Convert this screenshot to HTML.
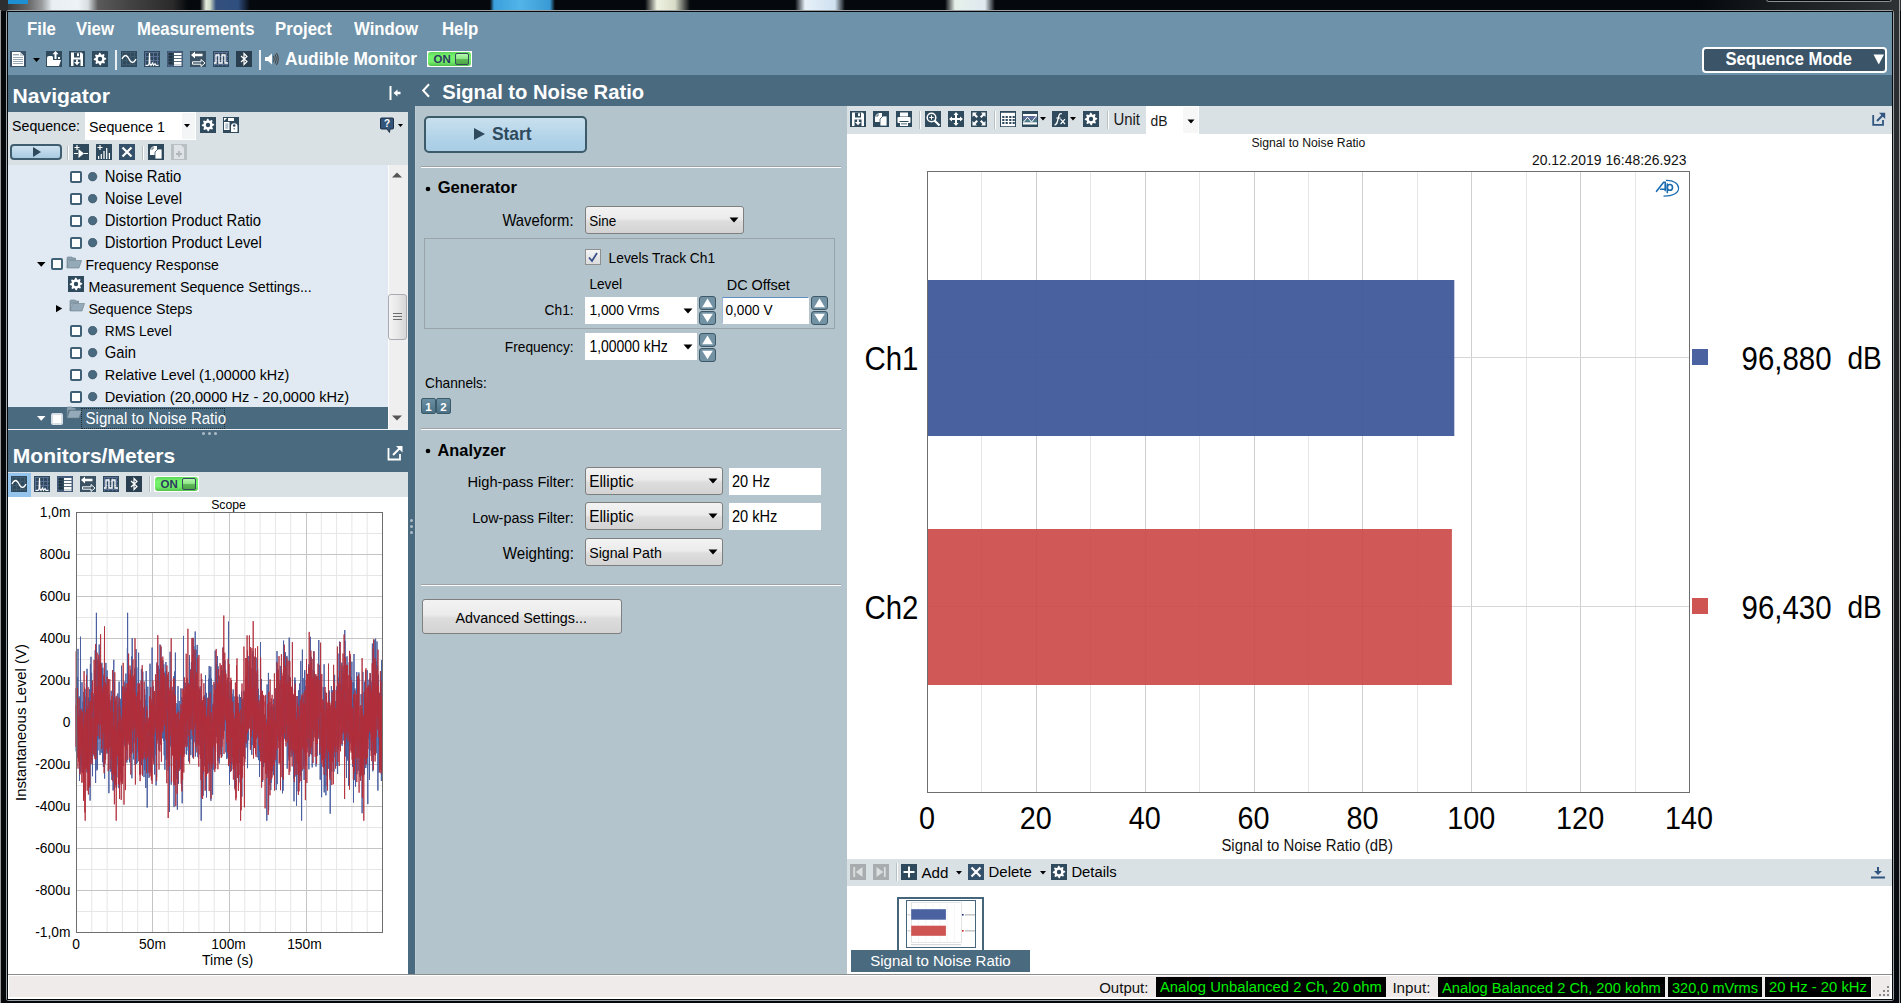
<!DOCTYPE html>
<html><head><meta charset="utf-8"><style>
html,body{margin:0;padding:0;}
body{width:1901px;height:1003px;overflow:hidden;position:relative;background:#05080c;font-family:"Liberation Sans",sans-serif;}
.b{position:absolute;}
.t{position:absolute;white-space:nowrap;line-height:1;}
</style></head><body>
<div class="b" style="left:0px;top:0px;width:1901px;height:12px;background:#05080c;"></div>
<div class="b" style="left:0px;top:0px;width:8px;height:11px;background:#2c2e30;"></div>
<div class="b" style="left:0px;top:11px;width:8px;height:992px;background:#06090c;"></div>
<div class="b" style="left:8px;top:0px;width:242px;height:11px;background:linear-gradient(90deg,#3a3a3a 0,#666 20px,#9a9c9e 34px,#e8eef2 44px,#eef3f8 70px,#d8dde0 80px,#5a5a5a 90px,#444 120px,#2a2a2a 165px,#05080c 180px,#05080c 192px,#e4ecdc 198px,#d0dcc8 202px,#34507c 208px,#2f4f80 230px,#05080c 242px);"></div>
<div class="b" style="left:8px;top:0px;width:20px;height:4px;background:#1e8fd0;"></div>
<div class="b" style="left:490px;top:0px;width:65px;height:11px;background:linear-gradient(90deg,#05080c,#3aa0dc 4px,#52b4e8 30px,#3a9ad4 60px,#05080c);"></div>
<div class="b" style="left:645px;top:0px;width:45px;height:11px;background:linear-gradient(90deg,#05080c,#eef2e0 12px,#d8dcc8 30px,#05080c);"></div>
<div class="b" style="left:795px;top:0px;width:50px;height:11px;background:linear-gradient(90deg,#05080c,#e6f0f8 10px,#cfe0f0 40px,#05080c);"></div>
<div class="b" style="left:945px;top:0px;width:50px;height:11px;background:linear-gradient(90deg,#05080c,#e6f0ea 10px,#dfe8f0 40px,#05080c);"></div>
<div class="b" style="left:0px;top:10px;width:1px;height:993px;background:#9a9a9a;"></div>
<div class="b" style="left:1700px;top:0px;width:201px;height:11px;background:linear-gradient(90deg,#05080c,#1a1d20 80px,#2e3133 190px);"></div>
<div class="b" style="left:1766px;top:-2px;width:126px;height:4px;background:#05080c;box-sizing:border-box;border:1px solid #8e8e8e;border-top:none;border-radius:0 0 3px 3px;"></div>
<div class="b" style="left:1894px;top:10px;width:5px;height:960px;background:linear-gradient(#2e3133,#1a1c1e 60%,#06090c);"></div>
<div class="b" style="left:1899px;top:0px;width:1px;height:1003px;background:#9a9a9a;"></div>
<div class="b" style="left:6px;top:10px;width:1888px;height:991px;background:#9aa0a4;border-radius:3px 3px 3px 3px;"></div>
<div class="b" style="left:7px;top:11px;width:1886px;height:989px;background:#06090c;"></div>
<div class="b" style="left:8px;top:12px;width:1884px;height:987px;background:#6e92a9;"></div>
<div class="t" style="left:27.00px;top:21.58px;font-size:16.80px;color:#fff;transform-origin:0 14.22px;transform:scale(1,1.07);font-weight:bold;">File</div>
<div class="t" style="left:76.00px;top:21.58px;font-size:16.80px;color:#fff;transform-origin:0 14.22px;transform:scale(1,1.07);font-weight:bold;">View</div>
<div class="t" style="left:137.00px;top:21.58px;font-size:16.80px;color:#fff;transform-origin:0 14.22px;transform:scale(1,1.07);font-weight:bold;">Measurements</div>
<div class="t" style="left:275.00px;top:21.58px;font-size:16.80px;color:#fff;transform-origin:0 14.22px;transform:scale(1,1.07);font-weight:bold;">Project</div>
<div class="t" style="left:354.00px;top:21.58px;font-size:16.80px;color:#fff;transform-origin:0 14.22px;transform:scale(1,1.07);font-weight:bold;">Window</div>
<div class="t" style="left:442.00px;top:21.58px;font-size:16.80px;color:#fff;transform-origin:0 14.22px;transform:scale(1,1.07);font-weight:bold;">Help</div>
<svg class="b" style="left:10px;top:51px;" width="16" height="16" viewBox="0 0 16 16"><rect x="0" y="0" width="16" height="16" fill="#3b5168"/><path d="M2 1 H10 L14 5 V15 H2 Z" fill="#fff"/><path d="M10 1 V5 H14" fill="#c8d0d8"/><rect x="3" y="3" width="6" height="1.4" fill="#9aa8b4"/><rect x="3" y="6" width="10" height="1" fill="#9aa8b4"/><rect x="3" y="8" width="10" height="1" fill="#9aa8b4"/><rect x="3" y="10" width="10" height="1" fill="#9aa8b4"/><rect x="3" y="12" width="10" height="1" fill="#9aa8b4"/></svg>
<svg class="b" style="left:33px;top:58px;" width="7" height="4" viewBox="0 0 7 4"><path d="M0 0 H7 L3.5 4 Z" fill="#000"/></svg>
<svg class="b" style="left:46px;top:51px;" width="16" height="16" viewBox="0 0 16 16"><rect x="0" y="0" width="16" height="16" fill="#2f4a5c"/><path d="M1 7 Q1 5 3 5 H6 L7 6 V15 H1 Z" fill="#fff"/><path d="M2.5 15 L5 9 H15 L13 15 Z" fill="#fff"/><path d="M9.5 0 L6.5 3.2 H8.5 V8 H10.5 V3.2 H12.5 Z" fill="#fff"/><rect x="12" y="6" width="2" height="2" fill="#fff"/></svg>
<svg class="b" style="left:69px;top:51px;" width="16" height="16" viewBox="0 0 16 16"><rect x="0" y="0" width="16" height="16" fill="#2f4a5c"/><path d="M2 1.5 H12.5 L14 3 V15 H2 Z" fill="#fff"/><rect x="5" y="1.5" width="6" height="5" fill="#2f4a5c"/><rect x="8" y="2.3" width="2" height="2.8" fill="#fff"/><rect x="4.5" y="8.5" width="7" height="6.5" fill="#2f4a5c"/><path d="M5 11 H11 L8 14.3 Z" fill="#fff"/><rect x="7.1" y="8.5" width="1.8" height="3" fill="#fff"/></svg>
<svg class="b" style="left:92px;top:51px;" width="16" height="16" viewBox="0 0 16 16"><rect x="0" y="0" width="16" height="16" fill="#2f4a5c"/><polygon points="14.13,7.09 14.19,8.30 12.46,9.12 12.16,9.97 12.98,11.69 12.16,12.59 10.36,11.95 9.55,12.33 8.91,14.13 7.70,14.19 6.88,12.46 6.03,12.16 4.31,12.98 3.41,12.16 4.05,10.36 3.67,9.55 1.87,8.91 1.81,7.70 3.54,6.88 3.84,6.03 3.02,4.31 3.84,3.41 5.64,4.05 6.45,3.67 7.09,1.87 8.30,1.81 9.12,3.54 9.97,3.84 11.69,3.02 12.59,3.84 11.95,5.64 12.33,6.45" fill="#fff"/><circle cx="8" cy="8" r="2.2" fill="#2f4a5c"/></svg>
<div class="b" style="left:115px;top:50px;width:2px;height:20px;background:#e8eef2;"></div>
<svg class="b" style="left:121px;top:51px;" width="16" height="16" viewBox="0 0 16 16"><rect x="0" y="0" width="16" height="16" fill="#2f4a5c"/><line x1="1.5" y1="1" x2="1.5" y2="15" stroke="#3f5a6c" stroke-width="1"/><line x1="1" y1="1.5" x2="15" y2="1.5" stroke="#3f5a6c" stroke-width="1"/><line x1="5.5" y1="1" x2="5.5" y2="15" stroke="#3f5a6c" stroke-width="1"/><line x1="1" y1="5.5" x2="15" y2="5.5" stroke="#3f5a6c" stroke-width="1"/><line x1="9.5" y1="1" x2="9.5" y2="15" stroke="#3f5a6c" stroke-width="1"/><line x1="1" y1="9.5" x2="15" y2="9.5" stroke="#3f5a6c" stroke-width="1"/><line x1="13.5" y1="1" x2="13.5" y2="15" stroke="#3f5a6c" stroke-width="1"/><line x1="1" y1="13.5" x2="15" y2="13.5" stroke="#3f5a6c" stroke-width="1"/><path d="M1 8 Q4.5 1 8 8 T15 8" fill="none" stroke="#fff" stroke-width="1.3"/></svg>
<svg class="b" style="left:144px;top:51px;" width="16" height="16" viewBox="0 0 16 16"><rect x="0" y="0" width="16" height="16" fill="#2f4a5c"/><line x1="1.5" y1="1" x2="1.5" y2="15" stroke="#5a6e96" stroke-width="1"/><line x1="1" y1="1.5" x2="15" y2="1.5" stroke="#5a6e96" stroke-width="1"/><line x1="5.5" y1="1" x2="5.5" y2="15" stroke="#5a6e96" stroke-width="1"/><line x1="1" y1="5.5" x2="15" y2="5.5" stroke="#5a6e96" stroke-width="1"/><line x1="9.5" y1="1" x2="9.5" y2="15" stroke="#5a6e96" stroke-width="1"/><line x1="1" y1="9.5" x2="15" y2="9.5" stroke="#5a6e96" stroke-width="1"/><line x1="13.5" y1="1" x2="13.5" y2="15" stroke="#5a6e96" stroke-width="1"/><line x1="1" y1="13.5" x2="15" y2="13.5" stroke="#5a6e96" stroke-width="1"/><path d="M1.5 14.5 H4 L5 13 L5.5 2 L6 13 L7 14.5 L8.5 12 L9.5 14.5 L11 12.5 L12 14.5 H14.5" fill="none" stroke="#fff" stroke-width="1.1"/></svg>
<svg class="b" style="left:167px;top:51px;" width="16" height="16" viewBox="0 0 16 16"><rect x="0" y="0" width="16" height="16" fill="#2f4a5c"/><rect x="1" y="1" width="14" height="14" fill="none" stroke="#5a6e96"/><rect x="1.5" y="2" width="4" height="2" fill="#203444"/><rect x="7" y="2" width="7.5" height="2.2" fill="#fff"/><rect x="1.5" y="5" width="4" height="2" fill="#203444"/><rect x="7" y="5" width="7.5" height="2.2" fill="#fff"/><rect x="1.5" y="8" width="4" height="2" fill="#203444"/><rect x="7" y="8" width="7.5" height="2.2" fill="#fff"/><rect x="1.5" y="11" width="4" height="2" fill="#203444"/><rect x="7" y="11" width="7.5" height="2.2" fill="#fff"/><rect x="7" y="13.3" width="7.5" height="1.5" fill="#fff"/></svg>
<svg class="b" style="left:190px;top:51px;" width="16" height="16" viewBox="0 0 16 16"><rect x="0" y="0" width="16" height="16" fill="#3a5264"/><path d="M1 4 L5 0.5 V2.8 H12.5 V5.2 H5 V7.5 Z" fill="#fff"/><path d="M15 12 L11 15.5 V13.2 H2.5 V10.8 H11 V8.5 Z" fill="none" stroke="#fff" stroke-width="1"/></svg>
<svg class="b" style="left:213px;top:51px;" width="16" height="16" viewBox="0 0 16 16"><rect x="0" y="0" width="16" height="16" fill="#2f4a5c"/><line x1="1.5" y1="1" x2="1.5" y2="15" stroke="#5a6e96" stroke-width="1"/><line x1="1" y1="1.5" x2="15" y2="1.5" stroke="#5a6e96" stroke-width="1"/><line x1="5.5" y1="1" x2="5.5" y2="15" stroke="#5a6e96" stroke-width="1"/><line x1="1" y1="5.5" x2="15" y2="5.5" stroke="#5a6e96" stroke-width="1"/><line x1="9.5" y1="1" x2="9.5" y2="15" stroke="#5a6e96" stroke-width="1"/><line x1="1" y1="9.5" x2="15" y2="9.5" stroke="#5a6e96" stroke-width="1"/><line x1="13.5" y1="1" x2="13.5" y2="15" stroke="#5a6e96" stroke-width="1"/><line x1="1" y1="13.5" x2="15" y2="13.5" stroke="#5a6e96" stroke-width="1"/><path d="M1 12 H3 V4 H6 V12 H9 V4 H12 V12 H15" fill="none" stroke="#fff" stroke-width="1.3"/></svg>
<svg class="b" style="left:236px;top:51px;" width="16" height="16" viewBox="0 0 16 16"><rect x="0" y="0" width="16" height="16" fill="#2a4050"/><path d="M5 5 L11 10.5 L8 13.5 V2.5 L11 5.5 L5 11" fill="none" stroke="#fff" stroke-width="1.2"/></svg>
<div class="b" style="left:259px;top:50px;width:2px;height:20px;background:#e8eef2;"></div>
<svg class="b" style="left:264px;top:51px;" width="16" height="16" viewBox="0 0 16 16"><path d="M1 6 H4 L8 2.5 V13.5 L4 10 H1 Z" fill="#fff"/><path d="M9.5 5 Q11 8 9.5 11" fill="none" stroke="#444" stroke-width="1.1"/><path d="M11 3.5 Q13.5 8 11 12.5" fill="none" stroke="#444" stroke-width="1.1"/><path d="M12.5 2 Q16 8 12.5 14" fill="none" stroke="#444" stroke-width="1.1"/></svg>
<div class="t" style="left:285.00px;top:50.81px;font-size:17.35px;color:#fff;transform-origin:0 14.69px;transform:scale(1,1.07);font-weight:bold;">Audible Monitor</div>
<div class="b" style="left:427px;top:51px;width:45px;height:16px;background:#fff;"></div>
<div class="b" style="left:428px;top:52px;width:43px;height:14px;background:linear-gradient(#5fd457,#76f46e 30%,#72ee6a 70%,#52c04a);border-radius:3px;"></div>
<div class="t" style="left:433.50px;top:53.86px;font-size:11.50px;color:#2b3a5e;font-weight:bold;">ON</div>
<div class="b" style="left:455px;top:53px;width:14px;height:12px;background:linear-gradient(#b8f8b0,#8ee886 45%,#60b858 55%,#4aa844);box-sizing:border-box;border:1px solid #34485e;border-radius:2px;"></div>
<div class="b" style="left:1702px;top:47px;width:185px;height:26px;background:#3b5467;box-sizing:border-box;border:2px solid #fff;border-radius:4px;"></div>
<div class="t" style="left:1725.50px;top:51.93px;font-size:16.62px;color:#fff;transform-origin:0 14.07px;transform:scale(1,1.07);font-weight:bold;">Sequence Mode</div>
<svg class="b" style="left:1873px;top:54px;" width="12" height="11" viewBox="0 0 12 11"><path d="M0.5 0.5 H11 L5.75 10.5 Z" fill="#fff"/></svg>
<div class="b" style="left:8px;top:75px;width:1884px;height:900px;background:#4a6a80;"></div>
<div class="t" style="left:12.50px;top:84.60px;font-size:21.14px;color:#fff;font-weight:bold;">Navigator</div>
<div class="t" style="left:442.20px;top:82.40px;font-size:20.20px;color:#fff;font-weight:bold;">Signal to Noise Ratio</div>
<div class="b" style="left:8px;top:112px;width:400px;height:53px;background:#dae1e5;"></div>
<div class="b" style="left:8px;top:165px;width:400px;height:264px;background:#e1eaf2;"></div>
<div class="t" style="left:12.80px;top:445.19px;font-size:21.04px;color:#fff;font-weight:bold;">Monitors/Meters</div>
<div class="b" style="left:8px;top:472px;width:400px;height:25px;background:#dae1e5;"></div>
<div class="b" style="left:8px;top:497px;width:400px;height:477px;background:#fff;"></div>
<div class="b" style="left:415px;top:106px;width:432px;height:868px;background:#b4c4cc;"></div>
<div class="b" style="left:415px;top:106px;width:1px;height:868px;background:#bccad2;"></div>
<div class="b" style="left:847px;top:106px;width:1045px;height:28px;background:#dae1e5;"></div>
<div class="b" style="left:847px;top:134px;width:1045px;height:725px;background:#fff;"></div>
<div class="b" style="left:847px;top:859px;width:1045px;height:27px;background:#dae1e5;"></div>
<div class="b" style="left:847px;top:886px;width:1045px;height:88px;background:#fff;"></div>
<div class="b" style="left:8px;top:974px;width:1884px;height:1px;background:#8c8c8c;"></div>
<div class="b" style="left:8px;top:975px;width:1884px;height:24px;background:#fff;"></div>
<div class="b" style="left:9px;top:976px;width:1862px;height:21px;background:#efebea;"></div>
<div class="b" style="left:1872px;top:976px;width:18px;height:21px;background:#efebea;"></div>
<svg class="b" style="left:389px;top:86px;" width="12" height="14" viewBox="0 0 12 14"><rect x="0.5" y="0" width="2" height="14" fill="#fff"/><path d="M4.5 7 L8.5 3.5 V5.8 H11.5 V8.2 H8.5 V10.5 Z" fill="#fff"/></svg>
<svg class="b" style="left:421px;top:83px;" width="10" height="15" viewBox="0 0 10 15"><path d="M8 1.2 L2.2 7.5 L8 13.8" fill="none" stroke="#fff" stroke-width="2"/></svg>
<div class="t" style="left:12.00px;top:118.96px;font-size:14.22px;color:#000;transform-origin:0 12.04px;transform:scale(1,1.06);">Sequence:</div>
<div class="b" style="left:85px;top:112px;width:111px;height:28px;background:#fff;"></div>
<div class="b" style="left:182px;top:113px;width:13px;height:26px;background:#f4f5f6;"></div>
<svg class="b" style="left:182px;top:124px;" width="10" height="5" viewBox="0 0 10 5"><path d="M2 0 H8 L5 3.5 Z" fill="#000"/></svg>
<div class="t" style="left:89.00px;top:119.95px;font-size:14.24px;color:#000;transform-origin:0 12.05px;transform:scale(1,1.06);">Sequence 1</div>
<svg class="b" style="left:200px;top:117px;" width="16" height="16" viewBox="0 0 16 16"><rect x="0" y="0" width="16" height="16" fill="#2f4a5c"/><polygon points="14.13,7.09 14.19,8.30 12.46,9.12 12.16,9.97 12.98,11.69 12.16,12.59 10.36,11.95 9.55,12.33 8.91,14.13 7.70,14.19 6.88,12.46 6.03,12.16 4.31,12.98 3.41,12.16 4.05,10.36 3.67,9.55 1.87,8.91 1.81,7.70 3.54,6.88 3.84,6.03 3.02,4.31 3.84,3.41 5.64,4.05 6.45,3.67 7.09,1.87 8.30,1.81 9.12,3.54 9.97,3.84 11.69,3.02 12.59,3.84 11.95,5.64 12.33,6.45" fill="#fff"/><circle cx="8" cy="8" r="2.2" fill="#2f4a5c"/></svg>
<svg class="b" style="left:223px;top:117px;" width="16" height="16" viewBox="0 0 16 16"><rect x="0" y="0" width="16" height="16" fill="#2f4a5c"/><path d="M1 1 H4 L1 4 Z" fill="#fff"/><rect x="5" y="1" width="6" height="3" fill="#fff"/><rect x="1" y="5" width="5.5" height="8" fill="#fff"/><rect x="2.3" y="6.3" width="3" height="5.5" fill="#b4c4cc"/><path d="M8 15 V9.5 A3.2 3.2 0 0 1 14.5 9.5 V15 Z" fill="#fff"/><circle cx="11.2" cy="8.5" r="1.3" fill="#2f4a5c"/><circle cx="11.2" cy="11.8" r="0.8" fill="#5a7a8c"/></svg>
<svg class="b" style="left:380px;top:117px;" width="24" height="17" viewBox="0 0 24 17"><path d="M1.5 1 H12.5 Q13.5 1 13.5 2 V11 Q13.5 12 12.5 12 H10 L9.5 15.5 L7 12 H1.5 Q0.5 12 0.5 11 V2 Q0.5 1 1.5 1 Z" fill="#33557a" stroke="#1d2f44" stroke-width="1"/><text x="7" y="10" text-anchor="middle" font-family="Liberation Sans" font-weight="bold" font-size="10" fill="#fff">?</text><path d="M18 7 H23 L20.5 10 Z" fill="#000"/></svg>
<div class="b" style="left:10px;top:144px;width:52px;height:16px;background:linear-gradient(#cfe3f0,#a9cbe2);box-sizing:border-box;border:2px solid #3f5f70;border-radius:4px;"></div>
<svg class="b" style="left:33px;top:147px;" width="9" height="10" viewBox="0 0 9 10"><path d="M0 0 L8 5 L0 10 Z" fill="#2f4a5c"/></svg>
<div class="b" style="left:67px;top:146px;width:1px;height:14px;background:#b8c0c4;"></div>
<div class="b" style="left:68px;top:146px;width:1px;height:14px;background:#fff;"></div>
<svg class="b" style="left:73px;top:144px;" width="16" height="16" viewBox="0 0 16 16"><rect x="0" y="0" width="16" height="16" fill="#2f4a5c"/><path d="M1.5 3.5 H6.5 M4 1 V6" stroke="#fff" stroke-width="1.2"/><path d="M1 9.5 H5 M11 9.5 H15" stroke="#fff" stroke-width="1"/><path d="M5.5 5 L11 9.5 L5.5 14 Z" fill="#fff"/></svg>
<svg class="b" style="left:96px;top:144px;" width="16" height="16" viewBox="0 0 16 16"><rect x="0" y="0" width="16" height="16" fill="#2f4a5c"/><path d="M1.5 3.5 H6.5 M4 1 V6" stroke="#fff" stroke-width="1.2"/><rect x="2.0" y="12" width="1.2" height="3" fill="#fff"/><rect x="4.7" y="10" width="1.2" height="5" fill="#fff"/><rect x="7.4" y="7" width="1.2" height="8" fill="#fff"/><rect x="10.100000000000001" y="4" width="1.2" height="11" fill="#fff"/><rect x="12.8" y="9" width="1.2" height="6" fill="#fff"/></svg>
<svg class="b" style="left:119px;top:144px;" width="16" height="16" viewBox="0 0 16 16"><rect x="0" y="0" width="16" height="16" fill="#34506a"/><path d="M3.5 3.5 L12.5 12.5 M12.5 3.5 L3.5 12.5" stroke="#fff" stroke-width="2.2"/></svg>
<div class="b" style="left:142px;top:146px;width:1px;height:14px;background:#b8c0c4;"></div>
<div class="b" style="left:143px;top:146px;width:1px;height:14px;background:#fff;"></div>
<svg class="b" style="left:148px;top:144px;" width="16" height="16" viewBox="0 0 16 16"><rect x="0" y="0" width="16" height="16" fill="#2f4a5c"/><path d="M2 5 L5 2 H9 V11 H2 Z" fill="#fff"/><path d="M2 5 H5 V2" fill="none" stroke="#2f4a5c" stroke-width="0.8"/><path d="M7 8 L10 5 H14 V15 H7 Z" fill="#fff" stroke="#2f4a5c" stroke-width="0.8"/></svg>
<svg class="b" style="left:171px;top:144px;" width="16" height="16" viewBox="0 0 16 16"><rect x="0" y="0" width="16" height="16" fill="#b9c0c4"/><path d="M3 1 H10 L13 4 V15 H3 Z" fill="#dfe3e6"/><path d="M8 7 V13 M5 10 H11" stroke="#b0b8bc" stroke-width="1.8"/></svg>
<div class="b" style="left:70px;top:170.8px;width:12px;height:12px;background:#fff;box-sizing:border-box;border:2px solid #3f6075;border-radius:2px;"></div>
<svg class="b" style="left:88px;top:171.8px;" width="10" height="10" viewBox="0 0 10 10"><circle cx="4.6" cy="4.6" r="4.3" fill="#4a6a80" stroke="#2f4a5c" stroke-width="0.6"/></svg>
<div class="t" style="left:104.80px;top:169.57px;font-size:14.80px;color:#000;transform-origin:0 12.53px;transform:scale(1,1.06);">Noise Ratio</div>
<div class="b" style="left:70px;top:192.8px;width:12px;height:12px;background:#fff;box-sizing:border-box;border:2px solid #3f6075;border-radius:2px;"></div>
<svg class="b" style="left:88px;top:193.8px;" width="10" height="10" viewBox="0 0 10 10"><circle cx="4.6" cy="4.6" r="4.3" fill="#4a6a80" stroke="#2f4a5c" stroke-width="0.6"/></svg>
<div class="t" style="left:104.80px;top:191.57px;font-size:14.80px;color:#000;transform-origin:0 12.53px;transform:scale(1,1.06);">Noise Level</div>
<div class="b" style="left:70px;top:214.8px;width:12px;height:12px;background:#fff;box-sizing:border-box;border:2px solid #3f6075;border-radius:2px;"></div>
<svg class="b" style="left:88px;top:215.8px;" width="10" height="10" viewBox="0 0 10 10"><circle cx="4.6" cy="4.6" r="4.3" fill="#4a6a80" stroke="#2f4a5c" stroke-width="0.6"/></svg>
<div class="t" style="left:104.80px;top:213.57px;font-size:14.80px;color:#000;transform-origin:0 12.53px;transform:scale(1,1.06);">Distortion Product Ratio</div>
<div class="b" style="left:70px;top:236.8px;width:12px;height:12px;background:#fff;box-sizing:border-box;border:2px solid #3f6075;border-radius:2px;"></div>
<svg class="b" style="left:88px;top:237.8px;" width="10" height="10" viewBox="0 0 10 10"><circle cx="4.6" cy="4.6" r="4.3" fill="#4a6a80" stroke="#2f4a5c" stroke-width="0.6"/></svg>
<div class="t" style="left:104.80px;top:235.57px;font-size:14.80px;color:#000;transform-origin:0 12.53px;transform:scale(1,1.06);">Distortion Product Level</div>
<svg class="b" style="left:37px;top:262px;" width="9" height="5" viewBox="0 0 9 5"><path d="M0 0 H8.5 L4.25 4.8 Z" fill="#000"/></svg>
<div class="b" style="left:51px;top:258px;width:12px;height:12px;background:#fff;box-sizing:border-box;border:2px solid #3f6075;border-radius:2px;"></div>
<svg class="b" style="left:66px;top:256px;" width="16" height="13" viewBox="0 0 16 13"><path d="M1 11.5 V2 Q1 1 2 1 H6 L7 2 H9.5 V4 H2.5 Z" fill="#8ea4b2" stroke="#6a7e8a" stroke-width="0.6"/><path d="M1.2 12 L3.6 4.5 H15.5 L13 12 Z" fill="#94aab8" stroke="#6a7e8a" stroke-width="0.6"/></svg>
<div class="t" style="left:85.50px;top:258.21px;font-size:14.04px;color:#000;transform-origin:0 11.89px;transform:scale(1,1.06);">Frequency Response</div>
<svg class="b" style="left:68px;top:276px;" width="16" height="16" viewBox="0 0 16 16"><rect x="0" y="0" width="16" height="16" fill="#2f4a5c"/><polygon points="14.13,7.09 14.19,8.30 12.46,9.12 12.16,9.97 12.98,11.69 12.16,12.59 10.36,11.95 9.55,12.33 8.91,14.13 7.70,14.19 6.88,12.46 6.03,12.16 4.31,12.98 3.41,12.16 4.05,10.36 3.67,9.55 1.87,8.91 1.81,7.70 3.54,6.88 3.84,6.03 3.02,4.31 3.84,3.41 5.64,4.05 6.45,3.67 7.09,1.87 8.30,1.81 9.12,3.54 9.97,3.84 11.69,3.02 12.59,3.84 11.95,5.64 12.33,6.45" fill="#fff"/><circle cx="8" cy="8" r="2.2" fill="#2f4a5c"/></svg>
<div class="t" style="left:88.50px;top:279.99px;font-size:14.31px;color:#000;transform-origin:0 12.11px;transform:scale(1,1.06);">Measurement Sequence Settings...</div>
<svg class="b" style="left:56px;top:305px;" width="7" height="8" viewBox="0 0 7 8"><path d="M0 0 L6.2 3.6 L0 7.2 Z" fill="#000"/></svg>
<svg class="b" style="left:68.5px;top:299px;" width="16" height="13" viewBox="0 0 16 13"><path d="M1 11.5 V2 Q1 1 2 1 H6 L7 2 H9.5 V4 H2.5 Z" fill="#8ea4b2" stroke="#6a7e8a" stroke-width="0.6"/><path d="M1.2 12 L3.6 4.5 H15.5 L13 12 Z" fill="#94aab8" stroke="#6a7e8a" stroke-width="0.6"/></svg>
<div class="t" style="left:88.40px;top:302.10px;font-size:14.17px;color:#000;transform-origin:0 12.00px;transform:scale(1,1.06);">Sequence Steps</div>
<div class="b" style="left:70px;top:324.8px;width:12px;height:12px;background:#fff;box-sizing:border-box;border:2px solid #3f6075;border-radius:2px;"></div>
<svg class="b" style="left:88px;top:325.8px;" width="10" height="10" viewBox="0 0 10 10"><circle cx="4.6" cy="4.6" r="4.3" fill="#4a6a80" stroke="#2f4a5c" stroke-width="0.6"/></svg>
<div class="t" style="left:104.80px;top:324.50px;font-size:13.70px;color:#000;transform-origin:0 11.60px;transform:scale(1,1.06);">RMS Level</div>
<div class="b" style="left:70px;top:346.8px;width:12px;height:12px;background:#fff;box-sizing:border-box;border:2px solid #3f6075;border-radius:2px;"></div>
<svg class="b" style="left:88px;top:347.8px;" width="10" height="10" viewBox="0 0 10 10"><circle cx="4.6" cy="4.6" r="4.3" fill="#4a6a80" stroke="#2f4a5c" stroke-width="0.6"/></svg>
<div class="t" style="left:104.80px;top:345.57px;font-size:14.80px;color:#000;transform-origin:0 12.53px;transform:scale(1,1.06);">Gain</div>
<div class="b" style="left:70px;top:368.8px;width:12px;height:12px;background:#fff;box-sizing:border-box;border:2px solid #3f6075;border-radius:2px;"></div>
<svg class="b" style="left:88px;top:369.8px;" width="10" height="10" viewBox="0 0 10 10"><circle cx="4.6" cy="4.6" r="4.3" fill="#4a6a80" stroke="#2f4a5c" stroke-width="0.6"/></svg>
<div class="t" style="left:104.80px;top:367.93px;font-size:14.37px;color:#000;transform-origin:0 12.17px;transform:scale(1,1.06);">Relative Level (1,00000 kHz)</div>
<div class="b" style="left:70px;top:390.8px;width:12px;height:12px;background:#fff;box-sizing:border-box;border:2px solid #3f6075;border-radius:2px;"></div>
<svg class="b" style="left:88px;top:391.8px;" width="10" height="10" viewBox="0 0 10 10"><circle cx="4.6" cy="4.6" r="4.3" fill="#4a6a80" stroke="#2f4a5c" stroke-width="0.6"/></svg>
<div class="t" style="left:104.80px;top:389.73px;font-size:14.61px;color:#000;transform-origin:0 12.37px;transform:scale(1,1.06);">Deviation (20,0000 Hz - 20,0000 kHz)</div>
<div class="b" style="left:8px;top:407px;width:380px;height:22px;background:#4a6a80;"></div>
<svg class="b" style="left:37px;top:416px;" width="9" height="5" viewBox="0 0 9 5"><path d="M0 0 H8.5 L4.25 4.8 Z" fill="#fff"/></svg>
<div class="b" style="left:51px;top:413px;width:12px;height:12px;background:#fff;box-sizing:border-box;border:2px solid #d8e0e6;border-radius:2px;"></div>
<svg class="b" style="left:66px;top:406px;" width="16" height="13" viewBox="0 0 16 13"><path d="M1 11.5 V2 Q1 1 2 1 H6 L7 2 H9.5 V4 H2.5 Z" fill="#8ea4b2" stroke="#6a7e8a" stroke-width="0.6"/><path d="M1.2 12 L3.6 4.5 H15.5 L13 12 Z" fill="#94aab8" stroke="#6a7e8a" stroke-width="0.6"/></svg>
<div class="b" style="left:81px;top:408px;width:144px;height:21px;box-sizing:border-box;border:1px dotted #1a2a36;"></div>
<div class="t" style="left:85.50px;top:411.36px;font-size:15.05px;color:#fff;transform-origin:0 12.74px;transform:scale(1,1.06);">Signal to Noise Ratio</div>
<div class="b" style="left:388px;top:165px;width:20px;height:264px;background:#efefef;box-sizing:border-box;border-left:1px solid #fbfbfb;"></div>
<svg class="b" style="left:390px;top:171px;" width="14" height="8" viewBox="0 0 14 8"><path d="M2 6.5 L7 1.5 L12 6.5 Z" fill="#555"/></svg>
<svg class="b" style="left:390px;top:414px;" width="14" height="8" viewBox="0 0 14 8"><path d="M2 1.5 L7 6.5 L12 1.5 Z" fill="#555"/></svg>
<div class="b" style="left:388px;top:294px;width:19px;height:46px;background:linear-gradient(90deg,#f4f4f4,#e8e8e8 50%,#d6d6d6);box-sizing:border-box;border:1px solid #a8acb0;border-radius:3px;"></div>
<div class="b" style="left:393px;top:313px;width:9px;height:1px;background:#6c6c6c;"></div>
<div class="b" style="left:393px;top:316px;width:9px;height:1px;background:#6c6c6c;"></div>
<div class="b" style="left:393px;top:319px;width:9px;height:1px;background:#6c6c6c;"></div>
<div class="b" style="left:8px;top:429px;width:400px;height:1px;background:#eef2f5;"></div>
<div class="b" style="left:201.5px;top:432px;width:3px;height:3px;background:#aebcc6;border-radius:50%;"></div>
<div class="b" style="left:207.5px;top:432px;width:3px;height:3px;background:#aebcc6;border-radius:50%;"></div>
<div class="b" style="left:213.5px;top:432px;width:3px;height:3px;background:#aebcc6;border-radius:50%;"></div>
<svg class="b" style="left:387px;top:445px;" width="17" height="16" viewBox="0 0 17 16"><path d="M1.5 3 V14.5 H13 V9" fill="none" stroke="#fff" stroke-width="1.8"/><path d="M9 1 H15.5 V7.5 Z" fill="#fff"/><path d="M6 10 L13 3" stroke="#fff" stroke-width="2"/></svg>
<div class="b" style="left:8px;top:473px;width:23px;height:24px;background:#94c4ec;"></div>
<svg class="b" style="left:11px;top:476px;" width="16" height="16" viewBox="0 0 16 16"><rect x="0" y="0" width="16" height="16" fill="#2f4a5c"/><line x1="1.5" y1="1" x2="1.5" y2="15" stroke="#3f5a6c" stroke-width="1"/><line x1="1" y1="1.5" x2="15" y2="1.5" stroke="#3f5a6c" stroke-width="1"/><line x1="5.5" y1="1" x2="5.5" y2="15" stroke="#3f5a6c" stroke-width="1"/><line x1="1" y1="5.5" x2="15" y2="5.5" stroke="#3f5a6c" stroke-width="1"/><line x1="9.5" y1="1" x2="9.5" y2="15" stroke="#3f5a6c" stroke-width="1"/><line x1="1" y1="9.5" x2="15" y2="9.5" stroke="#3f5a6c" stroke-width="1"/><line x1="13.5" y1="1" x2="13.5" y2="15" stroke="#3f5a6c" stroke-width="1"/><line x1="1" y1="13.5" x2="15" y2="13.5" stroke="#3f5a6c" stroke-width="1"/><path d="M1 8 Q4.5 1 8 8 T15 8" fill="none" stroke="#fff" stroke-width="1.3"/></svg>
<svg class="b" style="left:34px;top:476px;" width="16" height="16" viewBox="0 0 16 16"><rect x="0" y="0" width="16" height="16" fill="#2f4a5c"/><line x1="1.5" y1="1" x2="1.5" y2="15" stroke="#5a6e96" stroke-width="1"/><line x1="1" y1="1.5" x2="15" y2="1.5" stroke="#5a6e96" stroke-width="1"/><line x1="5.5" y1="1" x2="5.5" y2="15" stroke="#5a6e96" stroke-width="1"/><line x1="1" y1="5.5" x2="15" y2="5.5" stroke="#5a6e96" stroke-width="1"/><line x1="9.5" y1="1" x2="9.5" y2="15" stroke="#5a6e96" stroke-width="1"/><line x1="1" y1="9.5" x2="15" y2="9.5" stroke="#5a6e96" stroke-width="1"/><line x1="13.5" y1="1" x2="13.5" y2="15" stroke="#5a6e96" stroke-width="1"/><line x1="1" y1="13.5" x2="15" y2="13.5" stroke="#5a6e96" stroke-width="1"/><path d="M1.5 14.5 H4 L5 13 L5.5 2 L6 13 L7 14.5 L8.5 12 L9.5 14.5 L11 12.5 L12 14.5 H14.5" fill="none" stroke="#fff" stroke-width="1.1"/></svg>
<svg class="b" style="left:57px;top:476px;" width="16" height="16" viewBox="0 0 16 16"><rect x="0" y="0" width="16" height="16" fill="#2f4a5c"/><rect x="1" y="1" width="14" height="14" fill="none" stroke="#5a6e96"/><rect x="1.5" y="2" width="4" height="2" fill="#203444"/><rect x="7" y="2" width="7.5" height="2.2" fill="#fff"/><rect x="1.5" y="5" width="4" height="2" fill="#203444"/><rect x="7" y="5" width="7.5" height="2.2" fill="#fff"/><rect x="1.5" y="8" width="4" height="2" fill="#203444"/><rect x="7" y="8" width="7.5" height="2.2" fill="#fff"/><rect x="1.5" y="11" width="4" height="2" fill="#203444"/><rect x="7" y="11" width="7.5" height="2.2" fill="#fff"/><rect x="7" y="13.3" width="7.5" height="1.5" fill="#fff"/></svg>
<svg class="b" style="left:80px;top:476px;" width="16" height="16" viewBox="0 0 16 16"><rect x="0" y="0" width="16" height="16" fill="#3a5264"/><path d="M1 4 L5 0.5 V2.8 H12.5 V5.2 H5 V7.5 Z" fill="#fff"/><path d="M15 12 L11 15.5 V13.2 H2.5 V10.8 H11 V8.5 Z" fill="none" stroke="#fff" stroke-width="1"/></svg>
<svg class="b" style="left:103px;top:476px;" width="16" height="16" viewBox="0 0 16 16"><rect x="0" y="0" width="16" height="16" fill="#2f4a5c"/><line x1="1.5" y1="1" x2="1.5" y2="15" stroke="#5a6e96" stroke-width="1"/><line x1="1" y1="1.5" x2="15" y2="1.5" stroke="#5a6e96" stroke-width="1"/><line x1="5.5" y1="1" x2="5.5" y2="15" stroke="#5a6e96" stroke-width="1"/><line x1="1" y1="5.5" x2="15" y2="5.5" stroke="#5a6e96" stroke-width="1"/><line x1="9.5" y1="1" x2="9.5" y2="15" stroke="#5a6e96" stroke-width="1"/><line x1="1" y1="9.5" x2="15" y2="9.5" stroke="#5a6e96" stroke-width="1"/><line x1="13.5" y1="1" x2="13.5" y2="15" stroke="#5a6e96" stroke-width="1"/><line x1="1" y1="13.5" x2="15" y2="13.5" stroke="#5a6e96" stroke-width="1"/><path d="M1 12 H3 V4 H6 V12 H9 V4 H12 V12 H15" fill="none" stroke="#fff" stroke-width="1.3"/></svg>
<svg class="b" style="left:126px;top:476px;" width="16" height="16" viewBox="0 0 16 16"><rect x="0" y="0" width="16" height="16" fill="#2a4050"/><path d="M5 5 L11 10.5 L8 13.5 V2.5 L11 5.5 L5 11" fill="none" stroke="#fff" stroke-width="1.2"/></svg>
<div class="b" style="left:149px;top:476px;width:1px;height:16px;background:#b8c0c4;"></div>
<div class="b" style="left:150px;top:476px;width:1px;height:16px;background:#fff;"></div>
<div class="b" style="left:154px;top:476px;width:45px;height:16px;background:#fff;"></div>
<div class="b" style="left:155px;top:477px;width:43px;height:14px;background:linear-gradient(#5fd457,#76f46e 30%,#72ee6a 70%,#52c04a);border-radius:3px;"></div>
<div class="t" style="left:160.50px;top:478.86px;font-size:11.50px;color:#2b3a5e;font-weight:bold;">ON</div>
<div class="b" style="left:182px;top:478px;width:14px;height:12px;background:linear-gradient(#b8f8b0,#8ee886 45%,#60b858 55%,#4aa844);box-sizing:border-box;border:1px solid #34485e;border-radius:2px;"></div>
<svg class="b" style="left:0px;top:0px;left:0;top:0;" width="420" height="1003" viewBox="0 0 420 1003"><line x1="76" y1="533.5" x2="382" y2="533.5" stroke="#e6e6e6" stroke-width="1"/><line x1="76" y1="575.5" x2="382" y2="575.5" stroke="#e6e6e6" stroke-width="1"/><line x1="76" y1="617.5" x2="382" y2="617.5" stroke="#e6e6e6" stroke-width="1"/><line x1="76" y1="659.5" x2="382" y2="659.5" stroke="#e6e6e6" stroke-width="1"/><line x1="76" y1="701.5" x2="382" y2="701.5" stroke="#e6e6e6" stroke-width="1"/><line x1="76" y1="743.5" x2="382" y2="743.5" stroke="#e6e6e6" stroke-width="1"/><line x1="76" y1="785.5" x2="382" y2="785.5" stroke="#e6e6e6" stroke-width="1"/><line x1="76" y1="827.5" x2="382" y2="827.5" stroke="#e6e6e6" stroke-width="1"/><line x1="76" y1="869.5" x2="382" y2="869.5" stroke="#e6e6e6" stroke-width="1"/><line x1="76" y1="911.5" x2="382" y2="911.5" stroke="#e6e6e6" stroke-width="1"/><line x1="91.8" y1="512" x2="91.8" y2="932" stroke="#e6e6e6" stroke-width="1"/><line x1="107.1" y1="512" x2="107.1" y2="932" stroke="#e6e6e6" stroke-width="1"/><line x1="122.4" y1="512" x2="122.4" y2="932" stroke="#e6e6e6" stroke-width="1"/><line x1="137.7" y1="512" x2="137.7" y2="932" stroke="#e6e6e6" stroke-width="1"/><line x1="168.3" y1="512" x2="168.3" y2="932" stroke="#e6e6e6" stroke-width="1"/><line x1="183.6" y1="512" x2="183.6" y2="932" stroke="#e6e6e6" stroke-width="1"/><line x1="198.9" y1="512" x2="198.9" y2="932" stroke="#e6e6e6" stroke-width="1"/><line x1="214.2" y1="512" x2="214.2" y2="932" stroke="#e6e6e6" stroke-width="1"/><line x1="244.8" y1="512" x2="244.8" y2="932" stroke="#e6e6e6" stroke-width="1"/><line x1="260.1" y1="512" x2="260.1" y2="932" stroke="#e6e6e6" stroke-width="1"/><line x1="275.4" y1="512" x2="275.4" y2="932" stroke="#e6e6e6" stroke-width="1"/><line x1="290.7" y1="512" x2="290.7" y2="932" stroke="#e6e6e6" stroke-width="1"/><line x1="321.3" y1="512" x2="321.3" y2="932" stroke="#e6e6e6" stroke-width="1"/><line x1="336.6" y1="512" x2="336.6" y2="932" stroke="#e6e6e6" stroke-width="1"/><line x1="351.9" y1="512" x2="351.9" y2="932" stroke="#e6e6e6" stroke-width="1"/><line x1="367.2" y1="512" x2="367.2" y2="932" stroke="#e6e6e6" stroke-width="1"/><line x1="76" y1="554.5" x2="382" y2="554.5" stroke="#c4c4c4" stroke-width="1"/><line x1="76" y1="596.5" x2="382" y2="596.5" stroke="#c4c4c4" stroke-width="1"/><line x1="76" y1="638.5" x2="382" y2="638.5" stroke="#c4c4c4" stroke-width="1"/><line x1="76" y1="680.5" x2="382" y2="680.5" stroke="#c4c4c4" stroke-width="1"/><line x1="76" y1="722.5" x2="382" y2="722.5" stroke="#c4c4c4" stroke-width="1"/><line x1="76" y1="764.5" x2="382" y2="764.5" stroke="#c4c4c4" stroke-width="1"/><line x1="76" y1="806.5" x2="382" y2="806.5" stroke="#c4c4c4" stroke-width="1"/><line x1="76" y1="848.5" x2="382" y2="848.5" stroke="#c4c4c4" stroke-width="1"/><line x1="76" y1="890.5" x2="382" y2="890.5" stroke="#c4c4c4" stroke-width="1"/><line x1="152.5" y1="512" x2="152.5" y2="932" stroke="#c4c4c4" stroke-width="1"/><line x1="229.5" y1="512" x2="229.5" y2="932" stroke="#c4c4c4" stroke-width="1"/><line x1="306.5" y1="512" x2="306.5" y2="932" stroke="#c4c4c4" stroke-width="1"/><polyline points="76.0,751.4 76.1,705.4 76.2,688.0 76.4,732.2 76.5,756.3 76.6,720.1 76.8,704.8 76.9,687.3 77.0,754.9 77.1,757.6 77.2,700.1 77.4,707.3 77.5,677.1 77.6,693.5 77.8,725.4 77.9,730.9 78.0,648.9 78.1,732.3 78.2,747.1 78.4,757.8 78.5,722.5 78.6,721.6 78.8,736.2 78.9,728.5 79.0,719.3 79.1,707.6 79.2,696.3 79.4,722.4 79.5,780.8 79.6,709.1 79.8,771.0 79.9,735.2 80.0,773.4 80.1,731.0 80.2,754.1 80.4,725.7 80.5,636.7 80.6,734.1 80.8,708.7 80.9,771.8 81.0,742.2 81.1,715.0 81.2,737.2 81.4,724.2 81.5,732.2 81.6,764.7 81.8,719.5 81.9,759.7 82.0,682.2 82.1,751.4 82.2,717.2 82.4,737.3 82.5,710.0 82.6,755.3 82.8,709.1 82.9,741.9 83.0,701.9 83.1,720.6 83.2,734.8 83.4,761.7 83.5,717.0 83.6,725.9 83.8,692.0 83.9,750.7 84.0,723.8 84.1,725.3 84.2,731.9 84.4,734.1 84.5,735.0 84.6,757.7 84.8,769.8 84.9,751.9 85.0,723.3 85.1,696.7 85.2,712.2 85.4,710.0 85.5,717.9 85.6,720.2 85.8,735.1 85.9,718.0 86.0,688.9 86.1,749.7 86.2,760.2 86.4,683.2 86.5,732.8 86.6,711.6 86.8,714.3 86.9,772.4 87.0,668.8 87.1,687.7 87.2,733.8 87.4,716.9 87.5,734.9 87.6,763.9 87.8,741.3 87.9,727.0 88.0,705.3 88.1,716.8 88.2,735.3 88.4,697.5 88.5,758.5 88.6,713.2 88.8,703.6 88.9,744.0 89.0,787.1 89.1,761.2 89.2,727.7 89.4,718.9 89.5,689.0 89.6,762.6 89.8,733.0 89.9,713.9 90.0,736.9 90.1,800.6 90.2,708.1 90.4,664.1 90.5,701.6 90.6,756.8 90.8,741.8 90.9,723.0 91.0,656.8 91.1,710.6 91.2,724.8 91.4,682.5 91.5,729.5 91.6,672.8 91.8,746.1 91.9,739.5 92.0,704.4 92.1,683.6 92.2,705.4 92.4,715.2 92.5,776.2 92.6,743.6 92.8,740.2 92.9,737.5 93.0,704.5 93.1,730.8 93.2,697.7 93.4,717.7 93.5,729.3 93.6,715.7 93.8,706.3 93.9,693.4 94.0,731.6 94.1,724.0 94.2,756.4 94.4,669.9 94.5,673.9 94.6,720.7 94.8,728.9 94.9,750.4 95.0,709.2 95.1,707.8 95.2,650.1 95.4,705.8 95.5,735.0 95.6,782.9 95.8,670.8 95.9,705.8 96.0,757.5 96.1,705.3 96.2,756.8 96.4,612.8 96.5,677.0 96.6,692.5 96.8,713.8 96.9,770.4 97.0,711.8 97.1,752.9 97.2,690.2 97.4,769.2 97.5,733.2 97.6,671.3 97.8,658.8 97.9,740.4 98.0,750.4 98.1,680.2 98.2,680.7 98.4,733.9 98.5,725.2 98.6,725.0 98.8,739.2 98.9,724.3 99.0,668.1 99.1,684.3 99.2,644.5 99.4,706.5 99.5,707.8 99.6,732.3 99.8,707.3 99.9,741.7 100.0,755.1 100.1,683.4 100.2,661.8 100.4,679.3 100.5,664.9 100.6,696.2 100.8,724.4 100.9,701.1 101.0,714.5 101.1,735.9 101.2,752.8 101.4,746.8 101.5,704.1 101.6,699.6 101.8,717.9 101.9,662.8 102.0,699.2 102.1,687.7 102.2,669.4 102.4,728.6 102.5,762.2 102.6,683.5 102.8,725.4 102.9,667.7 103.0,696.1 103.1,677.0 103.2,684.3 103.4,767.0 103.5,686.1 103.6,726.7 103.8,729.4 103.9,720.4 104.0,685.9 104.1,682.8 104.2,679.5 104.4,757.2 104.5,726.6 104.6,778.6 104.8,713.1 104.9,693.1 105.0,733.0 105.1,704.2 105.2,705.0 105.4,682.9 105.5,736.3 105.6,736.9 105.8,735.4 105.9,662.9 106.0,682.6 106.1,718.2 106.2,708.5 106.4,712.2 106.5,710.0 106.6,722.4 106.8,726.5 106.9,753.7 107.0,736.4 107.1,670.4 107.2,703.1 107.4,717.3 107.5,725.9 107.6,718.3 107.8,710.3 107.9,739.8 108.0,715.8 108.1,715.0 108.2,744.2 108.4,745.8 108.5,752.4 108.6,754.7 108.8,698.6 108.9,793.2 109.0,733.0 109.1,743.5 109.2,744.2 109.4,723.9 109.5,694.5 109.6,725.4 109.8,732.1 109.9,746.3 110.0,732.7 110.1,703.0 110.2,741.3 110.4,763.5 110.5,767.3 110.6,763.2 110.8,771.8 110.9,700.1 111.0,722.0 111.1,739.6 111.2,690.8 111.4,752.5 111.5,712.0 111.6,711.0 111.8,779.4 111.9,780.0 112.0,762.1 112.1,709.3 112.2,698.3 112.4,771.8 112.5,706.1 112.6,747.9 112.8,748.5 112.9,753.3 113.0,747.0 113.1,790.5 113.2,767.1 113.4,774.1 113.5,724.3 113.6,678.2 113.8,659.8 113.9,748.9 114.0,789.2 114.1,751.3 114.2,766.8 114.4,682.3 114.5,723.3 114.6,761.1 114.8,713.0 114.9,724.7 115.0,787.4 115.1,755.7 115.2,747.3 115.4,739.9 115.5,736.6 115.6,750.3 115.8,735.0 115.9,757.5 116.0,766.4 116.1,696.5 116.2,729.9 116.4,727.6 116.5,786.5 116.6,745.0 116.8,716.3 116.9,777.4 117.0,708.1 117.1,751.0 117.2,727.9 117.4,743.3 117.5,733.0 117.6,704.2 117.8,750.6 117.9,693.4 118.0,761.2 118.1,765.3 118.2,717.5 118.4,768.7 118.5,748.3 118.6,711.0 118.8,702.0 118.9,788.2 119.0,721.8 119.1,681.6 119.2,701.3 119.4,742.5 119.5,752.6 119.6,743.5 119.8,768.0 119.9,741.9 120.0,739.3 120.1,737.7 120.2,698.8 120.4,739.4 120.5,774.6 120.6,701.5 120.8,762.6 120.9,744.1 121.0,734.6 121.1,740.2 121.2,758.9 121.4,736.6 121.5,665.7 121.6,746.1 121.8,732.0 121.9,695.0 122.0,705.6 122.1,704.6 122.2,701.3 122.4,782.8 122.5,750.4 122.6,721.1 122.8,709.9 122.9,686.4 123.0,709.8 123.1,729.9 123.2,721.3 123.4,728.1 123.5,714.4 123.6,701.5 123.8,730.4 123.9,743.7 124.0,744.4 124.1,687.4 124.2,681.6 124.4,689.5 124.5,692.9 124.6,693.1 124.8,716.9 124.9,697.1 125.0,746.4 125.1,721.4 125.2,736.3 125.4,693.5 125.5,731.0 125.6,716.9 125.8,701.7 125.9,673.6 126.0,735.4 126.1,739.3 126.2,688.0 126.4,743.4 126.5,697.8 126.6,727.1 126.8,713.2 126.9,762.6 127.0,688.8 127.1,723.6 127.2,734.8 127.4,648.2 127.5,687.5 127.6,612.8 127.8,695.7 127.9,717.3 128.0,703.8 128.1,660.1 128.2,707.2 128.4,693.1 128.5,690.9 128.6,732.1 128.8,701.7 128.9,719.8 129.0,741.2 129.1,679.6 129.2,685.4 129.4,702.4 129.5,730.7 129.6,762.4 129.8,690.1 129.9,706.8 130.0,752.7 130.1,705.6 130.2,747.8 130.4,704.4 130.5,699.5 130.6,693.3 130.8,697.3 130.9,698.6 131.0,736.6 131.1,714.6 131.2,718.4 131.4,710.4 131.5,695.8 131.6,685.7 131.8,656.4 131.9,778.3 132.0,692.3 132.1,709.8 132.2,638.2 132.4,677.2 132.5,752.3 132.6,692.9 132.8,719.8 132.9,676.1 133.0,735.7 133.1,708.2 133.2,709.3 133.4,708.5 133.5,722.8 133.6,759.4 133.8,693.1 133.9,677.7 134.0,708.9 134.1,736.7 134.2,701.6 134.4,691.4 134.5,713.2 134.6,708.8 134.8,667.9 134.9,741.5 135.0,725.6 135.1,765.0 135.2,730.4 135.4,732.0 135.5,738.7 135.6,731.4 135.8,659.6 135.9,717.8 136.0,715.8 136.1,649.2 136.2,715.1 136.4,764.0 136.5,702.5 136.6,741.8 136.8,667.5 136.9,751.6 137.0,732.7 137.1,762.9 137.2,714.0 137.4,746.7 137.5,719.7 137.6,729.1 137.8,736.5 137.9,691.8 138.0,692.5 138.1,718.3 138.2,746.7 138.4,752.1 138.5,713.7 138.6,652.7 138.8,735.7 138.9,745.7 139.0,743.6 139.1,755.6 139.2,752.5 139.4,730.8 139.5,683.8 139.6,725.8 139.8,741.0 139.9,773.5 140.0,721.0 140.1,728.4 140.2,763.6 140.4,760.0 140.5,730.2 140.6,700.1 140.8,711.7 140.9,724.3 141.0,740.1 141.1,721.8 141.2,731.9 141.4,668.9 141.5,765.1 141.6,743.4 141.8,696.3 141.9,741.2 142.0,692.5 142.1,735.5 142.2,730.3 142.4,745.6 142.5,775.2 142.6,763.7 142.8,671.7 142.9,717.5 143.0,718.9 143.1,709.1 143.2,720.6 143.4,707.7 143.5,745.3 143.6,744.3 143.8,709.6 143.9,748.5 144.0,777.1 144.1,745.3 144.2,754.7 144.4,721.3 144.5,760.2 144.6,770.2 144.8,749.2 144.9,694.7 145.0,741.3 145.1,735.3 145.2,739.8 145.4,731.6 145.5,713.4 145.6,699.9 145.8,788.0 145.9,701.0 146.0,740.6 146.1,749.8 146.2,671.0 146.4,745.4 146.5,684.1 146.6,712.4 146.8,770.2 146.9,726.2 147.0,718.9 147.1,743.8 147.2,807.6 147.4,750.0 147.5,745.4 147.6,771.8 147.8,686.7 147.9,746.5 148.0,750.7 148.1,747.8 148.2,761.6 148.4,761.2 148.5,735.8 148.6,729.2 148.8,752.8 148.9,740.5 149.0,777.9 149.1,722.2 149.2,758.8 149.4,730.6 149.5,762.8 149.6,751.1 149.8,729.6 149.9,770.7 150.0,663.7 150.1,736.0 150.2,736.7 150.4,755.5 150.5,687.6 150.6,693.3 150.8,724.4 150.9,772.4 151.0,746.9 151.1,714.1 151.2,746.4 151.4,765.4 151.5,765.1 151.6,752.6 151.8,729.4 151.9,748.2 152.0,728.4 152.1,647.6 152.2,676.7 152.4,757.7 152.5,717.2 152.6,724.2 152.8,730.2 152.9,695.5 153.0,734.9 153.1,734.3 153.2,735.2 153.4,726.8 153.5,686.2 153.6,700.5 153.8,761.3 153.9,734.8 154.0,744.6 154.1,697.4 154.2,714.1 154.4,694.3 154.5,721.4 154.6,774.5 154.8,705.6 154.9,711.6 155.0,703.0 155.1,755.0 155.2,714.5 155.4,736.3 155.5,735.8 155.6,705.2 155.8,704.8 155.9,740.5 156.0,763.8 156.1,785.4 156.2,730.0 156.4,680.4 156.5,714.1 156.6,777.3 156.8,736.7 156.9,699.1 157.0,662.4 157.1,676.7 157.2,699.5 157.4,704.1 157.5,740.1 157.6,722.2 157.8,718.4 157.9,730.9 158.0,706.3 158.1,719.2 158.2,697.7 158.4,665.7 158.5,685.5 158.6,694.6 158.8,713.4 158.9,750.2 159.0,709.2 159.1,689.9 159.2,734.7 159.4,668.9 159.5,714.7 159.6,694.1 159.8,714.2 159.9,740.9 160.0,644.5 160.1,737.9 160.2,677.5 160.4,720.1 160.5,695.8 160.6,727.2 160.8,715.8 160.9,677.0 161.0,647.2 161.1,728.1 161.2,703.3 161.4,676.1 161.5,721.8 161.6,682.9 161.8,726.3 161.9,686.1 162.0,691.0 162.1,668.6 162.2,693.2 162.4,738.4 162.5,684.7 162.6,735.9 162.8,682.4 162.9,660.5 163.0,687.1 163.1,720.6 163.2,670.2 163.4,700.0 163.5,741.2 163.6,715.5 163.8,664.3 163.9,714.5 164.0,702.4 164.1,716.1 164.2,755.3 164.4,721.5 164.5,696.6 164.6,701.2 164.8,712.6 164.9,769.7 165.0,672.7 165.1,687.6 165.2,679.1 165.4,671.4 165.5,722.3 165.6,727.3 165.8,701.1 165.9,662.0 166.0,759.8 166.1,717.9 166.2,732.4 166.4,695.9 166.5,670.0 166.6,721.5 166.8,749.3 166.9,712.3 167.0,722.4 167.1,759.3 167.2,689.4 167.4,730.7 167.5,696.1 167.6,754.5 167.8,685.1 167.9,759.1 168.0,687.2 168.1,770.7 168.2,678.7 168.4,730.0 168.5,764.7 168.6,726.9 168.8,710.8 168.9,749.8 169.0,735.8 169.1,714.2 169.2,727.4 169.4,811.8 169.5,735.9 169.6,711.5 169.8,715.8 169.9,695.6 170.0,745.3 170.1,651.8 170.2,703.1 170.4,717.7 170.5,695.7 170.6,700.0 170.8,725.1 170.9,746.5 171.0,699.3 171.1,717.1 171.2,784.7 171.4,762.3 171.5,717.1 171.6,728.0 171.8,723.4 171.9,713.3 172.0,728.1 172.1,686.8 172.2,750.2 172.4,745.0 172.5,724.5 172.6,712.6 172.8,711.7 172.9,691.8 173.0,749.1 173.1,701.7 173.2,722.3 173.4,766.4 173.5,740.5 173.6,676.3 173.8,714.3 173.9,750.9 174.0,807.1 174.1,759.2 174.2,758.4 174.4,736.1 174.5,671.6 174.6,717.1 174.8,729.9 174.9,766.2 175.0,773.7 175.1,745.5 175.2,753.2 175.4,652.6 175.5,751.6 175.6,757.8 175.8,707.4 175.9,737.9 176.0,776.0 176.1,703.0 176.2,749.4 176.4,778.9 176.5,731.1 176.6,726.3 176.8,750.3 176.9,720.3 177.0,716.7 177.1,766.0 177.2,800.0 177.4,809.7 177.5,744.0 177.6,704.5 177.8,711.0 177.9,699.6 178.0,686.1 178.1,739.3 178.2,709.0 178.4,783.8 178.5,719.3 178.6,727.7 178.8,741.7 178.9,751.6 179.0,770.9 179.1,734.2 179.2,701.1 179.4,748.5 179.5,722.2 179.6,756.6 179.8,729.7 179.9,766.0 180.0,725.5 180.1,742.5 180.2,726.7 180.4,753.1 180.5,769.3 180.6,744.4 180.8,704.5 180.9,688.4 181.0,743.2 181.1,710.3 181.2,711.1 181.4,721.3 181.5,777.3 181.6,722.5 181.8,759.6 181.9,697.0 182.0,707.8 182.1,712.4 182.2,803.3 182.4,711.4 182.5,708.7 182.6,765.5 182.8,700.0 182.9,725.4 183.0,732.5 183.1,747.4 183.2,755.8 183.4,738.4 183.5,635.9 183.6,719.0 183.8,718.3 183.9,742.7 184.0,741.3 184.1,738.9 184.2,748.2 184.4,696.6 184.5,729.4 184.6,696.0 184.8,754.0 184.9,693.2 185.0,720.4 185.1,699.8 185.2,721.7 185.4,744.0 185.5,682.7 185.6,729.9 185.8,721.1 185.9,742.0 186.0,710.0 186.1,726.8 186.2,706.9 186.4,704.6 186.5,734.1 186.6,754.6 186.8,700.8 186.9,686.3 187.0,692.3 187.1,745.3 187.2,694.2 187.4,700.1 187.5,702.7 187.6,698.1 187.8,719.5 187.9,703.6 188.0,682.6 188.1,723.7 188.2,750.5 188.4,711.5 188.5,702.4 188.6,761.3 188.8,727.1 188.9,690.1 189.0,711.3 189.1,704.0 189.2,742.9 189.4,679.9 189.5,655.1 189.6,711.5 189.8,726.7 189.9,738.8 190.0,679.3 190.1,701.9 190.2,727.7 190.4,669.4 190.5,682.2 190.6,686.8 190.8,755.1 190.9,707.0 191.0,685.8 191.1,739.3 191.2,676.8 191.4,662.2 191.5,673.7 191.6,724.5 191.8,724.1 191.9,676.2 192.0,674.7 192.1,667.9 192.2,668.8 192.4,706.5 192.5,715.5 192.6,757.4 192.8,681.0 192.9,637.8 193.0,717.3 193.1,717.8 193.2,685.3 193.4,693.4 193.5,744.1 193.6,725.3 193.8,736.5 193.9,646.3 194.0,725.9 194.1,680.5 194.2,649.9 194.4,650.8 194.5,664.6 194.6,658.9 194.8,742.2 194.9,716.7 195.0,728.0 195.1,715.6 195.2,631.5 195.4,756.5 195.5,691.9 195.6,744.3 195.8,670.0 195.9,671.4 196.0,724.3 196.1,649.8 196.2,708.0 196.4,672.8 196.5,701.9 196.6,727.5 196.8,722.7 196.9,715.5 197.0,694.6 197.1,709.2 197.2,644.9 197.4,719.3 197.5,727.7 197.6,735.4 197.8,737.6 197.9,757.2 198.0,744.5 198.1,690.1 198.2,715.1 198.4,722.3 198.5,707.6 198.6,687.3 198.8,700.8 198.9,696.7 199.0,735.8 199.1,727.7 199.2,743.1 199.4,723.9 199.5,745.2 199.6,732.8 199.8,727.5 199.9,729.2 200.0,731.1 200.1,738.2 200.2,686.4 200.4,734.8 200.5,754.6 200.6,720.2 200.8,757.8 200.9,757.8 201.0,724.7 201.1,775.9 201.2,820.7 201.4,720.2 201.5,699.0 201.6,777.8 201.8,755.8 201.9,713.5 202.0,788.3 202.1,756.4 202.2,766.4 202.4,737.7 202.5,789.5 202.6,706.8 202.8,737.3 202.9,724.7 203.0,743.3 203.1,795.7 203.2,739.0 203.4,773.7 203.5,734.9 203.6,760.3 203.8,745.1 203.9,742.3 204.0,714.1 204.1,714.6 204.2,766.2 204.4,737.8 204.5,695.3 204.6,723.5 204.8,759.2 204.9,741.8 205.0,748.6 205.1,711.5 205.2,738.0 205.4,728.2 205.5,675.2 205.6,779.4 205.8,769.0 205.9,789.9 206.0,786.0 206.1,715.1 206.2,731.6 206.4,692.9 206.5,797.5 206.6,765.9 206.8,698.5 206.9,710.6 207.0,714.8 207.1,715.2 207.2,739.5 207.4,740.8 207.5,739.5 207.6,716.0 207.8,745.1 207.9,731.0 208.0,698.1 208.1,772.8 208.2,761.8 208.4,723.6 208.5,747.5 208.6,744.3 208.8,678.8 208.9,727.4 209.0,751.4 209.1,707.3 209.2,666.0 209.4,770.9 209.5,758.0 209.6,734.9 209.8,756.5 209.9,674.9 210.0,722.4 210.1,748.9 210.2,722.8 210.4,759.8 210.5,754.0 210.6,733.1 210.8,666.7 210.9,800.8 211.0,723.1 211.1,695.7 211.2,713.1 211.4,678.5 211.5,720.8 211.6,729.2 211.8,736.9 211.9,757.5 212.0,684.9 212.1,766.2 212.2,735.1 212.4,746.3 212.5,753.4 212.6,794.7 212.8,740.9 212.9,725.4 213.0,724.8 213.1,704.0 213.2,732.8 213.4,746.2 213.5,718.2 213.6,707.4 213.8,752.4 213.9,769.8 214.0,755.0 214.1,694.2 214.2,695.4 214.4,749.6 214.5,720.2 214.6,698.6 214.8,684.0 214.9,741.1 215.0,728.5 215.1,680.2 215.2,650.7 215.4,675.8 215.5,752.7 215.6,706.1 215.8,727.4 215.9,719.9 216.0,737.0 216.1,731.2 216.2,717.1 216.4,664.1 216.5,695.7 216.6,703.1 216.8,714.3 216.9,736.4 217.0,720.8 217.1,677.8 217.2,689.3 217.4,656.0 217.5,704.9 217.6,712.7 217.8,758.6 217.9,699.8 218.0,760.9 218.1,666.3 218.2,728.4 218.4,709.8 218.5,748.6 218.6,723.5 218.8,735.8 218.9,675.7 219.0,700.9 219.1,742.0 219.2,763.5 219.4,709.2 219.5,721.0 219.6,738.9 219.8,689.3 219.9,711.5 220.0,702.7 220.1,722.8 220.2,722.0 220.4,718.6 220.5,751.5 220.6,686.6 220.8,693.0 220.9,754.5 221.0,701.4 221.1,670.8 221.2,697.3 221.4,666.5 221.5,711.7 221.6,703.8 221.8,741.4 221.9,729.9 222.0,756.5 222.1,729.5 222.2,696.5 222.4,688.5 222.5,669.8 222.6,699.7 222.8,732.2 222.9,691.1 223.0,707.8 223.1,652.0 223.2,647.0 223.4,676.0 223.5,736.8 223.6,719.2 223.8,698.6 223.9,724.9 224.0,689.2 224.1,684.7 224.2,680.4 224.4,698.3 224.5,730.7 224.6,729.7 224.8,709.0 224.9,667.2 225.0,660.3 225.1,677.8 225.2,695.9 225.4,687.1 225.5,683.1 225.6,669.8 225.8,682.7 225.9,752.3 226.0,680.5 226.1,697.3 226.2,722.1 226.4,693.9 226.5,701.1 226.6,711.4 226.8,759.1 226.9,707.3 227.0,694.8 227.1,712.7 227.2,757.7 227.4,698.8 227.5,691.6 227.6,707.7 227.8,701.0 227.9,723.9 228.0,733.2 228.1,699.4 228.2,725.3 228.4,710.2 228.5,621.6 228.6,695.7 228.8,712.9 228.9,764.3 229.0,715.0 229.1,696.3 229.2,739.1 229.4,726.1 229.5,785.0 229.6,704.0 229.8,737.8 229.9,701.2 230.0,682.0 230.1,726.7 230.2,693.9 230.4,715.7 230.5,729.4 230.6,732.0 230.8,749.0 230.9,687.6 231.0,699.8 231.1,754.9 231.2,701.8 231.4,747.9 231.5,770.8 231.6,692.9 231.8,765.2 231.9,694.2 232.0,723.2 232.1,703.3 232.2,715.0 232.4,696.8 232.5,720.6 232.6,714.3 232.8,724.3 232.9,700.2 233.0,743.7 233.1,703.3 233.2,689.4 233.4,735.3 233.5,721.1 233.6,749.1 233.8,742.9 233.9,727.3 234.0,745.1 234.1,761.2 234.2,736.7 234.4,730.6 234.5,727.1 234.6,716.2 234.8,788.5 234.9,696.4 235.0,742.6 235.1,760.2 235.2,748.8 235.4,725.5 235.5,713.3 235.6,749.3 235.8,734.4 235.9,785.4 236.0,734.4 236.1,742.7 236.2,752.1 236.4,714.1 236.5,687.9 236.6,710.1 236.8,762.7 236.9,695.9 237.0,749.9 237.1,741.5 237.2,757.2 237.4,727.2 237.5,724.4 237.6,736.3 237.8,746.6 237.9,744.6 238.0,752.1 238.1,712.3 238.2,755.5 238.4,744.6 238.5,746.3 238.6,761.9 238.8,746.7 238.9,782.4 239.0,728.1 239.1,724.1 239.2,748.3 239.4,694.5 239.5,763.0 239.6,723.1 239.8,725.1 239.9,754.2 240.0,745.5 240.1,712.6 240.2,736.3 240.4,729.7 240.5,697.2 240.6,731.1 240.8,785.3 240.9,758.0 241.0,712.4 241.1,739.9 241.2,767.0 241.4,792.6 241.5,725.9 241.6,691.6 241.8,770.7 241.9,796.7 242.0,719.5 242.1,749.1 242.2,741.6 242.4,742.0 242.5,758.3 242.6,719.2 242.8,705.0 242.9,720.6 243.0,746.7 243.1,700.3 243.2,733.0 243.4,712.7 243.5,755.9 243.6,709.6 243.8,706.6 243.9,690.5 244.0,726.3 244.1,713.9 244.2,742.8 244.4,700.3 244.5,702.9 244.6,693.7 244.8,735.4 244.9,759.0 245.0,725.4 245.1,728.9 245.2,743.9 245.4,704.6 245.5,694.3 245.6,709.7 245.8,688.6 245.9,708.7 246.0,747.6 246.1,735.9 246.2,728.8 246.4,698.5 246.5,691.3 246.6,713.4 246.8,687.7 246.9,739.9 247.0,719.1 247.1,672.6 247.2,702.3 247.4,684.6 247.5,768.2 247.6,761.5 247.8,738.0 247.9,684.0 248.0,665.9 248.1,729.7 248.2,739.8 248.4,740.2 248.5,736.4 248.6,694.6 248.8,719.1 248.9,656.0 249.0,688.8 249.1,728.6 249.2,702.0 249.4,712.8 249.5,685.5 249.6,681.8 249.8,717.4 249.9,681.7 250.0,690.6 250.1,709.0 250.2,699.0 250.4,686.6 250.5,714.9 250.6,724.9 250.8,669.2 250.9,705.1 251.0,721.9 251.1,691.6 251.2,746.7 251.4,702.9 251.5,743.1 251.6,716.3 251.8,754.8 251.9,724.4 252.0,678.3 252.1,708.9 252.2,738.2 252.4,654.0 252.5,721.4 252.6,661.2 252.8,718.4 252.9,745.1 253.0,650.9 253.1,715.7 253.2,681.8 253.4,669.5 253.5,740.9 253.6,701.5 253.8,720.0 253.9,686.4 254.0,704.1 254.1,739.8 254.2,702.3 254.4,682.4 254.5,712.6 254.6,688.4 254.8,719.7 254.9,706.2 255.0,695.0 255.1,701.0 255.2,669.2 255.4,678.6 255.5,681.8 255.6,685.5 255.8,701.8 255.9,739.5 256.0,676.6 256.1,657.6 256.2,700.9 256.4,714.8 256.5,709.0 256.6,674.0 256.8,700.4 256.9,736.8 257.0,714.1 257.1,731.4 257.2,715.7 257.4,735.7 257.5,735.5 257.6,669.0 257.8,681.7 257.9,757.5 258.0,740.1 258.1,725.4 258.2,724.1 258.4,752.7 258.5,688.8 258.6,760.1 258.8,695.1 258.9,695.5 259.0,726.1 259.1,734.7 259.2,714.9 259.4,712.9 259.5,777.0 259.6,753.5 259.8,703.4 259.9,722.0 260.0,731.2 260.1,748.0 260.2,740.3 260.4,742.5 260.5,642.2 260.6,757.3 260.8,678.8 260.9,709.2 261.0,717.1 261.1,718.1 261.2,734.9 261.4,679.1 261.5,710.7 261.6,726.4 261.8,729.5 261.9,720.8 262.0,759.3 262.1,736.4 262.2,745.5 262.4,710.7 262.5,711.7 262.6,782.0 262.8,735.9 262.9,702.0 263.0,767.1 263.1,764.4 263.2,702.9 263.4,735.4 263.5,744.9 263.6,766.9 263.8,728.0 263.9,749.0 264.0,727.6 264.1,721.9 264.2,714.4 264.4,743.8 264.5,749.9 264.6,734.5 264.8,738.4 264.9,731.1 265.0,751.3 265.1,743.3 265.2,753.4 265.4,753.8 265.5,732.9 265.6,704.9 265.8,753.0 265.9,721.5 266.0,728.5 266.1,735.4 266.2,719.5 266.4,754.7 266.5,723.1 266.6,730.8 266.8,820.7 266.9,729.4 267.0,722.6 267.1,684.4 267.2,769.9 267.4,737.2 267.5,730.1 267.6,767.6 267.8,706.1 267.9,727.4 268.0,762.8 268.1,774.2 268.2,752.1 268.4,672.9 268.5,679.0 268.6,810.5 268.8,791.8 268.9,721.1 269.0,743.1 269.1,758.0 269.2,722.7 269.4,737.0 269.5,731.5 269.6,732.0 269.8,770.3 269.9,701.9 270.0,752.1 270.1,706.7 270.2,719.1 270.4,737.4 270.5,734.4 270.6,739.4 270.8,790.1 270.9,746.8 271.0,725.2 271.1,782.9 271.2,779.2 271.4,705.9 271.5,713.3 271.6,779.9 271.8,722.6 271.9,736.7 272.0,707.3 272.1,743.9 272.2,740.7 272.4,755.3 272.5,728.5 272.6,736.9 272.8,751.5 272.9,742.4 273.0,753.6 273.1,714.0 273.2,760.7 273.4,775.2 273.5,757.9 273.6,699.2 273.8,744.1 273.9,710.8 274.0,707.8 274.1,742.8 274.2,706.4 274.4,713.0 274.5,728.2 274.6,746.6 274.8,727.8 274.9,762.2 275.0,733.0 275.1,741.2 275.2,711.7 275.4,714.0 275.5,741.6 275.6,698.1 275.8,688.3 275.9,720.0 276.0,742.5 276.1,706.5 276.2,790.1 276.4,736.6 276.5,702.8 276.6,661.8 276.8,739.6 276.9,674.4 277.0,651.1 277.1,663.3 277.2,784.1 277.4,684.8 277.5,710.3 277.6,686.3 277.8,720.0 277.9,732.0 278.0,720.5 278.1,670.6 278.2,689.1 278.4,721.1 278.5,701.4 278.6,687.2 278.8,695.3 278.9,712.4 279.0,729.6 279.1,731.7 279.2,722.5 279.4,725.5 279.5,754.6 279.6,749.5 279.8,683.5 279.9,740.5 280.0,745.6 280.1,709.0 280.2,665.9 280.4,670.9 280.5,718.7 280.6,736.3 280.8,721.7 280.9,732.2 281.0,721.6 281.1,691.8 281.2,736.0 281.4,727.6 281.5,712.4 281.6,705.6 281.8,726.7 281.9,727.2 282.0,736.8 282.1,725.8 282.2,689.0 282.4,710.9 282.5,793.3 282.6,686.0 282.8,705.6 282.9,728.7 283.0,710.9 283.1,790.7 283.2,751.1 283.4,669.9 283.5,641.9 283.6,640.6 283.8,724.7 283.9,702.4 284.0,681.1 284.1,739.1 284.2,653.4 284.4,724.6 284.5,693.7 284.6,737.2 284.8,693.5 284.9,704.7 285.0,673.1 285.1,737.8 285.2,704.9 285.4,652.3 285.5,739.5 285.6,695.0 285.8,692.8 285.9,720.0 286.0,713.6 286.1,665.2 286.2,673.4 286.4,690.2 286.5,699.2 286.6,740.0 286.8,704.8 286.9,655.9 287.0,677.6 287.1,747.7 287.2,768.7 287.4,728.3 287.5,704.6 287.6,725.7 287.8,719.0 287.9,700.6 288.0,684.9 288.1,705.2 288.2,675.4 288.4,753.3 288.5,698.9 288.6,700.6 288.8,756.4 288.9,677.4 289.0,760.5 289.1,756.5 289.2,637.6 289.4,677.9 289.5,705.0 289.6,677.1 289.8,683.5 289.9,750.0 290.0,703.7 290.1,677.5 290.2,723.3 290.4,717.0 290.5,733.1 290.6,698.8 290.8,736.6 290.9,738.1 291.0,757.1 291.1,748.9 291.2,716.1 291.4,709.2 291.5,734.7 291.6,754.4 291.8,714.5 291.9,714.4 292.0,688.2 292.1,740.2 292.2,738.2 292.4,711.8 292.5,682.7 292.6,729.1 292.8,730.4 292.9,755.8 293.0,739.9 293.1,701.8 293.2,705.0 293.4,697.7 293.5,778.5 293.6,706.6 293.8,758.4 293.9,714.6 294.0,801.3 294.1,735.5 294.2,758.8 294.4,696.3 294.5,730.3 294.6,696.2 294.8,747.3 294.9,677.5 295.0,748.2 295.1,680.2 295.2,750.1 295.4,764.8 295.5,710.2 295.6,748.4 295.8,738.7 295.9,776.6 296.0,747.6 296.1,734.5 296.2,758.7 296.4,726.8 296.5,805.7 296.6,712.6 296.8,750.8 296.9,696.1 297.0,749.5 297.1,758.6 297.2,752.7 297.4,731.6 297.5,722.4 297.6,753.5 297.8,763.4 297.9,727.5 298.0,716.0 298.1,791.4 298.2,771.0 298.4,760.1 298.5,690.4 298.6,704.4 298.8,717.1 298.9,725.9 299.0,773.2 299.1,707.5 299.2,753.3 299.4,763.6 299.5,683.5 299.6,782.6 299.8,699.5 299.9,734.0 300.0,766.8 300.1,734.5 300.2,764.2 300.4,733.9 300.5,758.1 300.6,773.9 300.8,660.9 300.9,753.4 301.0,709.5 301.1,739.7 301.2,718.2 301.4,774.8 301.5,768.1 301.6,820.7 301.8,707.6 301.9,723.7 302.0,770.9 302.1,711.6 302.2,718.4 302.4,649.6 302.5,728.2 302.6,707.9 302.8,716.5 302.9,711.5 303.0,734.5 303.1,745.6 303.2,712.2 303.4,696.4 303.5,766.5 303.6,765.2 303.8,732.6 303.9,678.2 304.0,736.7 304.1,780.0 304.2,706.0 304.4,707.1 304.5,671.8 304.6,722.8 304.8,670.1 304.9,748.7 305.0,700.5 305.1,722.6 305.2,761.1 305.4,733.8 305.5,686.2 305.6,691.9 305.8,735.3 305.9,691.2 306.0,696.8 306.1,696.5 306.2,713.9 306.4,712.9 306.5,745.6 306.6,722.9 306.8,716.8 306.9,741.6 307.0,727.9 307.1,714.2 307.2,712.3 307.4,687.1 307.5,747.8 307.6,728.8 307.8,708.8 307.9,727.3 308.0,706.0 308.1,729.1 308.2,680.3 308.4,721.2 308.5,747.4 308.6,691.6 308.8,664.4 308.9,769.3 309.0,716.1 309.1,709.9 309.2,681.2 309.4,667.3 309.5,715.4 309.6,756.1 309.8,690.4 309.9,680.1 310.0,695.7 310.1,706.6 310.2,732.4 310.4,636.8 310.5,743.1 310.6,751.8 310.8,678.7 310.9,698.6 311.0,687.1 311.1,696.0 311.2,656.8 311.4,664.2 311.5,721.9 311.6,676.1 311.8,739.8 311.9,755.1 312.0,669.6 312.1,717.3 312.2,767.4 312.4,704.9 312.5,723.7 312.6,689.2 312.8,705.6 312.9,726.4 313.0,724.6 313.1,681.2 313.2,730.8 313.4,699.7 313.5,732.4 313.6,690.2 313.8,651.1 313.9,686.6 314.0,670.7 314.1,690.1 314.2,731.5 314.4,712.2 314.5,701.4 314.6,690.6 314.8,721.2 314.9,685.7 315.0,724.8 315.1,701.9 315.2,704.2 315.4,737.8 315.5,674.8 315.6,702.9 315.8,701.3 315.9,705.6 316.0,766.5 316.1,746.1 316.2,731.5 316.4,676.4 316.5,722.6 316.6,688.2 316.8,736.3 316.9,731.2 317.0,720.5 317.1,676.0 317.2,755.8 317.4,712.7 317.5,696.0 317.6,704.3 317.8,709.0 317.9,686.1 318.0,700.8 318.1,739.1 318.2,691.4 318.4,733.2 318.5,720.7 318.6,668.7 318.8,640.0 318.9,669.4 319.0,699.8 319.1,735.4 319.2,735.3 319.4,664.9 319.5,704.3 319.6,755.0 319.8,668.9 319.9,698.3 320.0,677.2 320.1,704.3 320.2,779.7 320.4,738.6 320.5,721.7 320.6,722.9 320.8,674.3 320.9,738.6 321.0,722.3 321.1,721.6 321.2,723.1 321.4,751.1 321.5,757.1 321.6,797.2 321.8,712.6 321.9,728.7 322.0,717.3 322.1,754.5 322.2,724.1 322.4,753.1 322.5,754.7 322.6,715.8 322.8,707.5 322.9,709.5 323.0,728.2 323.1,738.7 323.2,687.1 323.4,692.0 323.5,747.3 323.6,761.0 323.8,718.8 323.9,720.8 324.0,757.2 324.1,664.3 324.2,792.4 324.4,756.1 324.5,725.1 324.6,703.6 324.8,787.1 324.9,746.0 325.0,691.7 325.1,692.9 325.2,741.8 325.4,733.6 325.5,760.9 325.6,723.9 325.8,766.3 325.9,795.3 326.0,780.8 326.1,735.0 326.2,775.4 326.4,704.8 326.5,699.9 326.6,708.5 326.8,718.8 326.9,705.0 327.0,730.6 327.1,713.2 327.2,725.1 327.4,716.1 327.5,768.8 327.6,758.5 327.8,768.6 327.9,715.3 328.0,724.9 328.1,762.8 328.2,768.8 328.4,756.9 328.5,714.6 328.6,743.5 328.8,747.2 328.9,760.4 329.0,743.8 329.1,693.7 329.2,760.4 329.4,750.6 329.5,690.7 329.6,719.2 329.8,773.4 329.9,708.3 330.0,776.9 330.1,723.7 330.2,813.7 330.4,768.9 330.5,712.9 330.6,756.9 330.8,760.6 330.9,737.7 331.0,739.0 331.1,752.6 331.2,758.5 331.4,686.1 331.5,694.7 331.6,728.5 331.8,771.5 331.9,753.1 332.0,745.9 332.1,722.9 332.2,690.1 332.4,751.8 332.5,732.0 332.6,748.5 332.8,731.6 332.9,755.4 333.0,724.0 333.1,700.8 333.2,745.9 333.4,743.6 333.5,730.3 333.6,771.6 333.8,680.0 333.9,771.6 334.0,742.6 334.1,757.5 334.2,687.5 334.4,745.1 334.5,745.2 334.6,674.9 334.8,733.1 334.9,751.9 335.0,728.9 335.1,722.6 335.2,749.6 335.4,732.8 335.5,733.1 335.6,705.4 335.8,703.6 335.9,701.2 336.0,728.7 336.1,701.3 336.2,730.3 336.4,689.8 336.5,711.4 336.6,735.1 336.8,686.3 336.9,765.9 337.0,749.6 337.1,744.1 337.2,724.2 337.4,755.8 337.5,754.5 337.6,774.0 337.8,715.1 337.9,740.4 338.0,653.6 338.1,694.5 338.2,750.0 338.4,677.6 338.5,712.6 338.6,683.8 338.8,747.2 338.9,680.5 339.0,681.9 339.1,725.7 339.2,737.9 339.4,723.7 339.5,704.6 339.6,641.6 339.8,658.7 339.9,667.3 340.0,717.1 340.1,719.9 340.2,699.2 340.4,717.6 340.5,722.9 340.6,715.0 340.8,683.9 340.9,710.2 341.0,701.0 341.1,715.2 341.2,713.0 341.4,716.6 341.5,669.9 341.6,699.7 341.8,662.6 341.9,710.9 342.0,674.7 342.1,745.8 342.2,717.0 342.4,706.8 342.5,723.3 342.6,708.0 342.8,731.4 342.9,709.1 343.0,723.6 343.1,704.1 343.2,712.5 343.4,732.9 343.5,715.6 343.6,702.8 343.8,740.6 343.9,700.6 344.0,667.0 344.1,710.0 344.2,687.3 344.4,685.2 344.5,726.6 344.6,664.8 344.8,630.1 344.9,733.2 345.0,640.8 345.1,724.1 345.2,661.0 345.4,756.4 345.5,670.6 345.6,699.8 345.8,741.3 345.9,728.0 346.0,734.7 346.1,730.5 346.2,693.5 346.4,709.9 346.5,777.9 346.6,714.1 346.8,691.6 346.9,702.9 347.0,656.4 347.1,759.5 347.2,699.1 347.4,705.6 347.5,685.7 347.6,746.0 347.8,745.4 347.9,712.5 348.0,705.7 348.1,761.0 348.2,697.9 348.4,709.1 348.5,687.8 348.6,785.7 348.8,695.3 348.9,736.2 349.0,724.6 349.1,688.3 349.2,662.2 349.4,707.4 349.5,715.4 349.6,674.5 349.8,739.2 349.9,718.0 350.0,728.7 350.1,743.0 350.2,709.2 350.4,655.9 350.5,708.5 350.6,701.6 350.8,717.5 350.9,684.2 351.0,712.3 351.1,743.7 351.2,715.6 351.4,677.0 351.5,721.9 351.6,684.9 351.8,722.4 351.9,661.7 352.0,713.1 352.1,702.7 352.2,730.7 352.4,698.4 352.5,729.8 352.6,766.8 352.8,715.3 352.9,759.8 353.0,682.0 353.1,702.5 353.2,725.5 353.4,706.4 353.5,802.5 353.6,682.6 353.8,746.8 353.9,708.8 354.0,654.0 354.1,776.3 354.2,741.7 354.4,720.1 354.5,718.2 354.6,780.1 354.8,758.5 354.9,688.3 355.0,749.6 355.1,716.3 355.2,772.8 355.4,759.8 355.5,786.7 355.6,726.1 355.8,700.6 355.9,731.9 356.0,743.0 356.1,728.3 356.2,722.0 356.4,744.4 356.5,720.1 356.6,679.6 356.8,672.0 356.9,753.8 357.0,774.2 357.1,681.7 357.2,709.2 357.4,702.6 357.5,720.7 357.6,745.1 357.8,710.2 357.9,706.3 358.0,704.8 358.1,770.9 358.2,709.3 358.4,749.7 358.5,750.1 358.6,729.4 358.8,750.0 358.9,672.4 359.0,723.6 359.1,732.3 359.2,745.7 359.4,732.9 359.5,746.9 359.6,723.2 359.8,715.1 359.9,715.8 360.0,776.8 360.1,749.8 360.2,737.7 360.4,775.7 360.5,729.0 360.6,744.1 360.8,738.1 360.9,728.6 361.0,757.7 361.1,694.1 361.2,709.1 361.4,755.2 361.5,725.4 361.6,717.2 361.8,760.9 361.9,748.8 362.0,717.9 362.1,813.2 362.2,776.2 362.4,728.0 362.5,719.2 362.6,764.0 362.8,711.8 362.9,671.9 363.0,730.1 363.1,737.1 363.2,733.5 363.4,764.8 363.5,718.9 363.6,729.4 363.8,712.5 363.9,692.3 364.0,732.5 364.1,727.9 364.2,723.3 364.4,681.7 364.5,774.5 364.6,731.7 364.8,749.5 364.9,727.1 365.0,706.1 365.1,727.9 365.2,708.1 365.4,723.6 365.5,749.4 365.6,747.4 365.8,768.0 365.9,720.8 366.0,738.3 366.1,701.9 366.2,697.8 366.4,751.3 366.5,756.6 366.6,706.8 366.8,749.6 366.9,717.5 367.0,705.3 367.1,733.9 367.2,670.3 367.4,744.3 367.5,708.8 367.6,732.7 367.8,804.1 367.9,724.8 368.0,723.9 368.1,701.9 368.2,722.2 368.4,739.1 368.5,732.4 368.6,725.8 368.8,694.4 368.9,724.1 369.0,679.7 369.1,690.2 369.2,736.3 369.4,684.2 369.5,779.7 369.6,712.6 369.8,741.5 369.9,715.4 370.0,678.5 370.1,711.7 370.2,716.2 370.4,673.7 370.5,732.7 370.6,734.3 370.8,681.4 370.9,691.6 371.0,750.7 371.1,704.4 371.2,685.7 371.4,712.8 371.5,719.5 371.6,703.5 371.8,701.0 371.9,727.4 372.0,682.2 372.1,752.2 372.2,708.2 372.4,643.6 372.5,736.5 372.6,706.4 372.8,771.3 372.9,729.0 373.0,738.2 373.1,702.8 373.2,718.7 373.4,650.8 373.5,730.9 373.6,704.8 373.8,697.5 373.9,685.0 374.0,677.5 374.1,749.0 374.2,639.6 374.4,712.3 374.5,724.1 374.6,751.1 374.8,716.1 374.9,754.8 375.0,697.8 375.1,720.6 375.2,693.8 375.4,726.2 375.5,701.2 375.6,638.7 375.8,669.4 375.9,698.9 376.0,732.3 376.1,661.2 376.2,753.1 376.4,745.1 376.5,666.4 376.6,721.7 376.8,665.2 376.9,687.9 377.0,641.5 377.1,653.1 377.2,688.2 377.4,723.8 377.5,688.4 377.6,665.1 377.8,702.1 377.9,790.6 378.0,717.7 378.1,717.7 378.2,709.0 378.4,717.8 378.5,674.7 378.6,745.1 378.8,695.8 378.9,766.6 379.0,772.5 379.1,739.0 379.2,731.8 379.4,736.4 379.5,731.1 379.6,693.3 379.8,694.7 379.9,709.6 380.0,706.6 380.1,732.9 380.2,741.8 380.4,754.9 380.5,726.1 380.6,747.4 380.8,724.4 380.9,694.3 381.0,699.9 381.1,677.7 381.2,743.8 381.4,781.0 381.5,749.9 381.6,660.2 381.8,698.3 381.9,731.8 382.0,681.2" fill="none" stroke="#4a5fa0" stroke-width="1"/><polyline points="76.0,651.3 76.1,746.7 76.2,705.6 76.4,723.1 76.5,741.4 76.6,733.0 76.8,731.9 76.9,720.2 77.0,706.6 77.1,688.9 77.2,712.9 77.4,687.8 77.5,707.5 77.6,718.2 77.8,728.1 77.9,750.4 78.0,768.6 78.1,725.7 78.2,728.8 78.4,715.2 78.5,715.4 78.6,761.7 78.8,746.4 78.9,758.6 79.0,698.3 79.1,730.8 79.2,724.5 79.4,754.4 79.5,765.5 79.6,746.3 79.8,732.9 79.9,717.2 80.0,774.5 80.1,721.9 80.2,756.4 80.4,747.3 80.5,742.2 80.6,745.4 80.8,720.4 80.9,708.8 81.0,724.6 81.1,750.2 81.2,723.1 81.4,724.8 81.5,711.3 81.6,728.6 81.8,782.8 81.9,758.6 82.0,748.8 82.1,711.2 82.2,741.8 82.4,712.2 82.5,730.2 82.6,772.8 82.8,737.8 82.9,723.6 83.0,728.0 83.1,782.2 83.2,728.0 83.4,757.1 83.5,800.8 83.6,757.0 83.8,797.3 83.9,777.6 84.0,700.2 84.1,671.1 84.2,711.4 84.4,729.4 84.5,687.7 84.6,732.3 84.8,770.1 84.9,812.4 85.0,716.3 85.1,806.8 85.2,820.7 85.4,761.2 85.5,740.6 85.6,767.2 85.8,712.7 85.9,745.0 86.0,736.4 86.1,729.6 86.2,759.1 86.4,736.3 86.5,675.3 86.6,769.0 86.8,737.2 86.9,726.7 87.0,757.3 87.1,742.9 87.2,790.7 87.4,753.8 87.5,739.9 87.6,708.8 87.8,713.4 87.9,757.1 88.0,772.2 88.1,687.2 88.2,714.1 88.4,794.5 88.5,749.0 88.6,765.0 88.8,756.2 88.9,787.9 89.0,750.2 89.1,752.6 89.2,744.2 89.4,707.0 89.5,730.2 89.6,771.5 89.8,786.1 89.9,750.9 90.0,702.0 90.1,707.7 90.2,751.5 90.4,700.5 90.5,721.1 90.6,750.7 90.8,720.3 90.9,734.6 91.0,764.2 91.1,744.0 91.2,726.4 91.4,692.4 91.5,760.1 91.6,722.7 91.8,728.6 91.9,730.1 92.0,763.6 92.1,691.2 92.2,689.6 92.4,680.5 92.5,712.7 92.6,682.9 92.8,709.7 92.9,695.9 93.0,734.0 93.1,717.4 93.2,732.8 93.4,753.5 93.5,735.0 93.6,754.5 93.8,753.8 93.9,732.3 94.0,738.0 94.1,659.9 94.2,667.9 94.4,687.6 94.5,695.5 94.6,743.0 94.8,709.5 94.9,759.1 95.0,734.9 95.1,730.2 95.2,726.4 95.4,690.3 95.5,737.8 95.6,644.2 95.8,728.9 95.9,688.8 96.0,759.2 96.1,686.2 96.2,748.1 96.4,706.2 96.5,711.7 96.6,687.2 96.8,693.0 96.9,699.0 97.0,714.4 97.1,652.6 97.2,722.8 97.4,708.7 97.5,722.4 97.6,704.4 97.8,736.2 97.9,719.8 98.0,692.8 98.1,724.1 98.2,693.5 98.4,723.8 98.5,665.1 98.6,710.2 98.8,654.8 98.9,691.3 99.0,709.5 99.1,677.8 99.2,671.3 99.4,660.6 99.5,664.4 99.6,678.7 99.8,738.8 99.9,677.4 100.0,707.0 100.1,692.5 100.2,667.3 100.4,725.1 100.5,665.3 100.6,634.2 100.8,687.9 100.9,713.2 101.0,664.0 101.1,698.8 101.2,673.4 101.4,667.5 101.5,748.3 101.6,694.8 101.8,748.8 101.9,724.9 102.0,686.8 102.1,739.5 102.2,725.8 102.4,718.3 102.5,695.9 102.6,695.0 102.8,692.5 102.9,720.3 103.0,727.7 103.1,694.0 103.2,731.6 103.4,730.1 103.5,686.3 103.6,730.2 103.8,733.6 103.9,674.6 104.0,709.1 104.1,773.2 104.2,730.4 104.4,651.9 104.5,626.3 104.6,718.0 104.8,689.3 104.9,688.5 105.0,701.2 105.1,763.8 105.2,682.0 105.4,703.4 105.5,718.8 105.6,759.5 105.8,731.1 105.9,716.4 106.0,720.9 106.1,707.3 106.2,725.6 106.4,685.7 106.5,697.1 106.6,749.3 106.8,733.7 106.9,704.3 107.0,733.2 107.1,676.8 107.2,733.7 107.4,711.3 107.5,701.2 107.6,752.4 107.8,683.5 107.9,726.4 108.0,741.5 108.1,741.5 108.2,771.1 108.4,761.9 108.5,679.2 108.6,727.0 108.8,731.9 108.9,718.5 109.0,707.9 109.1,748.3 109.2,731.7 109.4,718.2 109.5,697.1 109.6,719.6 109.8,679.2 109.9,734.2 110.0,738.2 110.1,769.2 110.2,730.6 110.4,711.1 110.5,737.4 110.6,735.7 110.8,759.5 110.9,748.6 111.0,744.9 111.1,735.0 111.2,701.6 111.4,718.4 111.5,707.0 111.6,699.8 111.8,747.8 111.9,695.9 112.0,733.8 112.1,773.8 112.2,753.4 112.4,738.7 112.5,781.1 112.6,670.0 112.8,738.6 112.9,712.6 113.0,772.9 113.1,735.2 113.2,730.9 113.4,760.8 113.5,731.6 113.6,739.3 113.8,728.6 113.9,774.7 114.0,724.9 114.1,748.5 114.2,765.1 114.4,804.3 114.5,746.3 114.6,751.7 114.8,672.3 114.9,776.3 115.0,698.2 115.1,705.2 115.2,729.6 115.4,734.5 115.5,727.3 115.6,784.7 115.8,700.9 115.9,751.3 116.0,763.5 116.1,742.2 116.2,820.7 116.4,780.5 116.5,776.2 116.6,787.5 116.8,725.1 116.9,695.7 117.0,741.5 117.1,751.2 117.2,732.4 117.4,756.3 117.5,737.8 117.6,729.7 117.8,748.0 117.9,753.2 118.0,739.0 118.1,739.2 118.2,721.1 118.4,784.3 118.5,772.8 118.6,754.2 118.8,725.8 118.9,777.2 119.0,704.5 119.1,697.6 119.2,760.4 119.4,706.3 119.5,799.0 119.6,741.1 119.8,784.6 119.9,706.5 120.0,712.8 120.1,722.2 120.2,753.6 120.4,769.2 120.5,724.1 120.6,750.7 120.8,715.8 120.9,781.4 121.0,722.4 121.1,719.5 121.2,799.9 121.4,770.6 121.5,753.8 121.6,750.3 121.8,782.6 121.9,731.7 122.0,764.6 122.1,733.5 122.2,784.1 122.4,764.8 122.5,709.9 122.6,779.4 122.8,730.2 122.9,686.7 123.0,704.9 123.1,766.2 123.2,662.9 123.4,743.1 123.5,699.4 123.6,698.1 123.8,734.8 123.9,706.7 124.0,804.6 124.1,721.5 124.2,719.1 124.4,733.3 124.5,719.2 124.6,691.3 124.8,694.6 124.9,739.5 125.0,698.0 125.1,686.4 125.2,716.7 125.4,708.3 125.5,790.1 125.6,764.3 125.8,707.4 125.9,761.3 126.0,692.8 126.1,683.3 126.2,745.2 126.4,750.0 126.5,721.5 126.6,708.9 126.8,691.2 126.9,721.3 127.0,713.3 127.1,742.8 127.2,705.4 127.4,735.7 127.5,683.8 127.6,692.3 127.8,759.8 127.9,702.0 128.0,743.4 128.1,683.4 128.2,741.1 128.4,674.2 128.5,679.6 128.6,653.6 128.8,700.4 128.9,708.3 129.0,674.3 129.1,744.8 129.2,710.3 129.4,718.1 129.5,710.4 129.6,754.4 129.8,757.0 129.9,757.7 130.0,665.6 130.1,717.7 130.2,689.7 130.4,711.3 130.5,714.5 130.6,669.8 130.8,774.6 130.9,713.8 131.0,730.1 131.1,734.0 131.2,754.1 131.4,751.8 131.5,742.0 131.6,675.7 131.8,727.3 131.9,720.9 132.0,712.5 132.1,689.5 132.2,677.6 132.4,702.0 132.5,707.6 132.6,692.7 132.8,731.0 132.9,701.8 133.0,659.3 133.1,727.2 133.2,733.3 133.4,753.2 133.5,707.3 133.6,691.0 133.8,721.5 133.9,718.9 134.0,675.6 134.1,709.0 134.2,690.0 134.4,720.9 134.5,673.1 134.6,684.6 134.8,715.3 134.9,728.7 135.0,638.3 135.1,743.0 135.2,740.2 135.4,784.6 135.5,693.1 135.6,711.5 135.8,716.1 135.9,758.1 136.0,713.9 136.1,737.5 136.2,748.9 136.4,722.5 136.5,707.0 136.6,720.5 136.8,731.2 136.9,695.9 137.0,710.4 137.1,728.5 137.2,701.7 137.4,710.1 137.5,692.8 137.6,695.7 137.8,698.8 137.9,737.6 138.0,683.0 138.1,692.6 138.2,737.4 138.4,686.4 138.5,720.1 138.6,752.1 138.8,724.8 138.9,761.1 139.0,692.2 139.1,761.4 139.2,683.4 139.4,750.9 139.5,730.3 139.6,690.3 139.8,717.3 139.9,775.1 140.0,732.2 140.1,781.1 140.2,709.9 140.4,759.0 140.5,732.7 140.6,734.3 140.8,774.3 140.9,721.9 141.0,680.8 141.1,758.5 141.2,749.3 141.4,722.5 141.5,698.8 141.6,759.0 141.8,728.6 141.9,724.4 142.0,704.9 142.1,759.1 142.2,665.2 142.4,677.7 142.5,775.5 142.6,759.7 142.8,726.8 142.9,755.8 143.0,752.9 143.1,738.1 143.2,759.4 143.4,756.3 143.5,732.9 143.6,750.7 143.8,729.2 143.9,709.8 144.0,708.0 144.1,737.6 144.2,681.6 144.4,751.8 144.5,715.2 144.6,689.2 144.8,735.6 144.9,717.9 145.0,755.0 145.1,757.9 145.2,735.9 145.4,728.1 145.5,731.5 145.6,723.0 145.8,732.9 145.9,744.6 146.0,759.6 146.1,745.3 146.2,740.8 146.4,742.6 146.5,773.2 146.6,706.2 146.8,711.0 146.9,735.6 147.0,755.8 147.1,710.8 147.2,748.6 147.4,748.9 147.5,725.0 147.6,757.3 147.8,738.0 147.9,755.3 148.0,724.1 148.1,729.2 148.2,720.7 148.4,728.5 148.5,731.4 148.6,729.6 148.8,717.7 148.9,767.2 149.0,773.1 149.1,737.6 149.2,734.8 149.4,746.1 149.5,696.4 149.6,725.3 149.8,702.7 149.9,735.3 150.0,776.4 150.1,776.0 150.2,706.5 150.4,735.4 150.5,749.9 150.6,699.7 150.8,687.1 150.9,724.2 151.0,698.6 151.1,743.2 151.2,760.7 151.4,780.3 151.5,702.5 151.6,776.5 151.8,743.9 151.9,730.1 152.0,715.3 152.1,783.9 152.2,737.5 152.4,753.4 152.5,689.0 152.6,734.9 152.8,747.5 152.9,680.6 153.0,723.7 153.1,705.5 153.2,718.2 153.4,731.3 153.5,705.4 153.6,746.1 153.8,764.3 153.9,743.3 154.0,706.7 154.1,734.7 154.2,693.5 154.4,702.9 154.5,716.6 154.6,691.0 154.8,710.9 154.9,712.1 155.0,728.2 155.1,723.0 155.2,721.7 155.4,689.6 155.5,674.4 155.6,687.8 155.8,710.8 155.9,720.7 156.0,709.6 156.1,732.4 156.2,716.4 156.4,724.8 156.5,716.1 156.6,781.0 156.8,714.3 156.9,695.5 157.0,743.4 157.1,663.7 157.2,708.5 157.4,727.9 157.5,672.2 157.6,738.0 157.8,635.2 157.9,730.5 158.0,684.0 158.1,669.9 158.2,690.1 158.4,705.5 158.5,728.7 158.6,712.6 158.8,702.1 158.9,680.5 159.0,769.6 159.1,690.3 159.2,738.6 159.4,724.2 159.5,709.5 159.6,724.1 159.8,689.3 159.9,751.7 160.0,692.6 160.1,734.0 160.2,715.7 160.4,707.5 160.5,744.6 160.6,693.5 160.8,645.5 160.9,723.1 161.0,729.8 161.1,662.6 161.2,658.1 161.4,761.8 161.5,714.6 161.6,727.1 161.8,699.9 161.9,707.3 162.0,732.8 162.1,716.7 162.2,673.6 162.4,730.7 162.5,698.3 162.6,687.1 162.8,656.6 162.9,692.9 163.0,698.1 163.1,731.4 163.2,698.0 163.4,667.8 163.5,692.5 163.6,671.2 163.8,718.8 163.9,683.7 164.0,713.0 164.1,725.7 164.2,723.8 164.4,673.1 164.5,690.5 164.6,712.1 164.8,714.4 164.9,685.0 165.0,720.2 165.1,676.5 165.2,699.7 165.4,724.4 165.5,714.1 165.6,738.7 165.8,739.6 165.9,724.1 166.0,724.0 166.1,720.8 166.2,732.1 166.4,730.1 166.5,702.6 166.6,749.4 166.8,783.2 166.9,665.4 167.0,710.4 167.1,708.5 167.2,681.6 167.4,682.7 167.5,674.6 167.6,688.8 167.8,694.3 167.9,702.7 168.0,720.2 168.1,720.5 168.2,818.0 168.4,671.9 168.5,721.7 168.6,746.7 168.8,687.1 168.9,739.6 169.0,709.7 169.1,744.8 169.2,753.7 169.4,690.6 169.5,718.5 169.6,766.4 169.8,704.7 169.9,698.4 170.0,732.2 170.1,704.8 170.2,688.5 170.4,692.7 170.5,708.3 170.6,704.7 170.8,681.3 170.9,721.4 171.0,735.4 171.1,735.9 171.2,638.3 171.4,757.6 171.5,729.0 171.6,781.9 171.8,731.6 171.9,736.1 172.0,733.8 172.1,710.0 172.2,690.6 172.4,726.3 172.5,755.4 172.6,747.6 172.8,733.3 172.9,754.6 173.0,736.6 173.1,720.1 173.2,729.3 173.4,678.6 173.5,782.5 173.6,732.6 173.8,706.9 173.9,767.9 174.0,785.2 174.1,678.7 174.2,710.9 174.4,722.9 174.5,704.7 174.6,766.9 174.8,771.0 174.9,695.1 175.0,736.2 175.1,785.1 175.2,743.5 175.4,695.6 175.5,770.2 175.6,785.5 175.8,806.1 175.9,745.1 176.0,743.6 176.1,759.5 176.2,757.0 176.4,749.2 176.5,759.3 176.6,757.6 176.8,713.9 176.9,740.8 177.0,726.8 177.1,793.9 177.2,767.5 177.4,712.9 177.5,737.4 177.6,712.5 177.8,782.8 177.9,723.3 178.0,757.4 178.1,741.1 178.2,760.8 178.4,768.1 178.5,771.0 178.6,744.7 178.8,711.3 178.9,770.8 179.0,757.3 179.1,768.2 179.2,763.9 179.4,721.0 179.5,752.0 179.6,766.4 179.8,719.5 179.9,729.2 180.0,728.9 180.1,734.3 180.2,755.0 180.4,714.9 180.5,755.2 180.6,730.9 180.8,732.5 180.9,704.2 181.0,740.9 181.1,713.1 181.2,783.7 181.4,731.6 181.5,729.4 181.6,731.7 181.8,791.3 181.9,713.0 182.0,751.0 182.1,752.3 182.2,688.5 182.4,738.5 182.5,705.3 182.6,779.8 182.8,711.3 182.9,724.8 183.0,721.6 183.1,756.4 183.2,719.0 183.4,734.2 183.5,689.8 183.6,742.0 183.8,772.5 183.9,697.0 184.0,756.7 184.1,732.0 184.2,704.0 184.4,677.4 184.5,708.6 184.6,703.5 184.8,718.1 184.9,719.3 185.0,724.1 185.1,712.7 185.2,746.8 185.4,715.0 185.5,687.5 185.6,715.5 185.8,723.5 185.9,697.7 186.0,743.0 186.1,724.0 186.2,653.7 186.4,693.9 186.5,695.0 186.6,719.3 186.8,735.8 186.9,747.0 187.0,713.8 187.1,677.7 187.2,715.6 187.4,689.8 187.5,720.9 187.6,709.5 187.8,701.3 187.9,628.8 188.0,707.6 188.1,736.3 188.2,684.3 188.4,710.3 188.5,694.3 188.6,729.7 188.8,683.8 188.9,728.1 189.0,697.2 189.1,719.1 189.2,728.5 189.4,690.8 189.5,695.4 189.6,763.6 189.8,686.8 189.9,683.8 190.0,700.9 190.1,696.2 190.2,697.7 190.4,697.0 190.5,714.9 190.6,675.7 190.8,669.9 190.9,728.3 191.0,702.6 191.1,730.2 191.2,717.1 191.4,677.1 191.5,703.3 191.6,698.0 191.8,714.3 191.9,638.0 192.0,671.0 192.1,692.8 192.2,698.0 192.4,654.7 192.5,669.9 192.6,695.3 192.8,708.6 192.9,735.5 193.0,665.9 193.1,656.0 193.2,638.0 193.4,695.9 193.5,678.9 193.6,758.7 193.8,685.6 193.9,725.1 194.0,727.3 194.1,727.8 194.2,729.1 194.4,719.3 194.5,689.9 194.6,724.9 194.8,715.6 194.9,709.8 195.0,649.7 195.1,684.5 195.2,723.8 195.4,684.7 195.5,660.7 195.6,711.4 195.8,687.2 195.9,677.8 196.0,747.4 196.1,704.2 196.2,712.1 196.4,686.1 196.5,672.8 196.6,723.1 196.8,752.4 196.9,724.5 197.0,710.7 197.1,729.5 197.2,704.8 197.4,744.6 197.5,697.7 197.6,692.4 197.8,657.4 197.9,717.0 198.0,686.1 198.1,734.1 198.2,734.1 198.4,737.5 198.5,719.4 198.6,752.1 198.8,766.7 198.9,655.0 199.0,726.1 199.1,718.3 199.2,713.6 199.4,731.1 199.5,725.6 199.6,688.8 199.8,713.0 199.9,690.3 200.0,754.6 200.1,708.9 200.2,747.9 200.4,759.0 200.5,703.2 200.6,717.3 200.8,705.0 200.9,707.4 201.0,779.9 201.1,710.6 201.2,673.6 201.4,722.0 201.5,700.6 201.6,688.1 201.8,678.9 201.9,797.6 202.0,737.7 202.1,733.9 202.2,737.1 202.4,700.1 202.5,765.5 202.6,798.9 202.8,724.0 202.9,739.2 203.0,703.3 203.1,702.3 203.2,722.9 203.4,696.5 203.5,770.1 203.6,736.3 203.8,771.7 203.9,683.2 204.0,742.6 204.1,709.2 204.2,723.3 204.4,715.8 204.5,708.7 204.6,706.1 204.8,715.6 204.9,734.6 205.0,717.4 205.1,790.8 205.2,763.3 205.4,698.4 205.5,723.1 205.6,777.8 205.8,774.1 205.9,772.6 206.0,750.3 206.1,715.9 206.2,740.4 206.4,718.8 206.5,775.8 206.6,743.0 206.8,735.6 206.9,728.8 207.0,720.4 207.1,737.2 207.2,717.9 207.4,706.9 207.5,726.9 207.6,773.6 207.8,759.2 207.9,764.3 208.0,697.6 208.1,718.8 208.2,738.8 208.4,756.6 208.5,756.5 208.6,699.4 208.8,744.9 208.9,756.7 209.0,761.6 209.1,721.1 209.2,791.1 209.4,754.7 209.5,722.2 209.6,716.7 209.8,722.9 209.9,747.2 210.0,715.9 210.1,692.7 210.2,761.5 210.4,761.0 210.5,747.6 210.6,734.7 210.8,751.4 210.9,754.4 211.0,798.6 211.1,712.2 211.2,764.9 211.4,734.8 211.5,749.5 211.6,715.9 211.8,768.5 211.9,765.3 212.0,731.8 212.1,731.7 212.2,746.9 212.4,722.0 212.5,746.3 212.6,741.9 212.8,764.4 212.9,732.0 213.0,705.6 213.1,734.5 213.2,731.8 213.4,703.2 213.5,740.6 213.6,746.6 213.8,725.7 213.9,682.0 214.0,738.1 214.1,728.8 214.2,717.7 214.4,738.2 214.5,735.8 214.6,689.9 214.8,771.9 214.9,710.6 215.0,698.2 215.1,689.0 215.2,716.3 215.4,709.0 215.5,737.4 215.6,768.6 215.8,714.7 215.9,715.4 216.0,708.1 216.1,683.1 216.2,649.0 216.4,704.2 216.5,670.4 216.6,711.8 216.8,707.2 216.9,743.2 217.0,708.8 217.1,732.0 217.2,709.1 217.4,752.0 217.5,683.5 217.6,755.2 217.8,700.0 217.9,769.2 218.0,712.7 218.1,704.8 218.2,688.9 218.4,669.0 218.5,744.5 218.6,714.3 218.8,716.6 218.9,708.7 219.0,675.8 219.1,726.0 219.2,737.9 219.4,725.7 219.5,683.6 219.6,729.5 219.8,757.8 219.9,719.8 220.0,674.6 220.1,663.2 220.2,724.9 220.4,724.5 220.5,685.2 220.6,677.7 220.8,705.9 220.9,703.6 221.0,683.3 221.1,747.8 221.2,665.0 221.4,733.5 221.5,757.7 221.6,668.5 221.8,702.8 221.9,681.7 222.0,746.7 222.1,695.3 222.2,695.6 222.4,697.8 222.5,699.2 222.6,705.6 222.8,705.1 222.9,736.1 223.0,648.0 223.1,717.8 223.2,739.1 223.4,695.4 223.5,711.0 223.6,725.0 223.8,615.5 223.9,693.0 224.0,754.0 224.1,718.1 224.2,715.3 224.4,707.0 224.5,687.5 224.6,691.8 224.8,652.7 224.9,716.4 225.0,713.4 225.1,674.9 225.2,671.8 225.4,712.5 225.5,720.4 225.6,673.7 225.8,688.0 225.9,673.8 226.0,675.3 226.1,691.9 226.2,701.2 226.4,702.5 226.5,707.0 226.6,742.8 226.8,693.1 226.9,684.4 227.0,688.6 227.1,727.6 227.2,714.9 227.4,677.7 227.5,679.2 227.6,735.8 227.8,751.9 227.9,705.4 228.0,753.2 228.1,658.8 228.2,716.2 228.4,693.6 228.5,766.1 228.6,710.5 228.8,709.1 228.9,757.7 229.0,664.0 229.1,715.7 229.2,704.1 229.4,725.2 229.5,711.0 229.6,699.0 229.8,707.6 229.9,707.3 230.0,764.3 230.1,720.7 230.2,755.8 230.4,713.1 230.5,742.4 230.6,771.9 230.8,677.8 230.9,730.7 231.0,733.3 231.1,723.7 231.2,729.6 231.4,706.6 231.5,680.1 231.6,737.6 231.8,708.0 231.9,707.7 232.0,763.1 232.1,708.4 232.2,702.3 232.4,732.7 232.5,738.4 232.6,757.8 232.8,701.7 232.9,749.6 233.0,726.7 233.1,769.2 233.2,740.7 233.4,779.6 233.5,756.6 233.6,712.7 233.8,766.4 233.9,765.0 234.0,756.7 234.1,749.3 234.2,769.1 234.4,732.5 234.5,754.0 234.6,718.3 234.8,726.0 234.9,731.9 235.0,729.6 235.1,726.5 235.2,790.3 235.4,682.5 235.5,789.5 235.6,700.5 235.8,763.3 235.9,800.3 236.0,780.7 236.1,798.1 236.2,735.0 236.4,750.2 236.5,665.4 236.6,738.2 236.8,762.4 236.9,704.2 237.0,658.4 237.1,764.6 237.2,765.6 237.4,744.2 237.5,778.0 237.6,764.5 237.8,696.9 237.9,711.4 238.0,711.7 238.1,739.8 238.2,706.9 238.4,790.8 238.5,703.0 238.6,784.7 238.8,769.6 238.9,731.8 239.0,774.9 239.1,735.5 239.2,734.4 239.4,712.6 239.5,745.5 239.6,739.0 239.8,749.1 239.9,744.1 240.0,748.7 240.1,742.8 240.2,726.2 240.4,709.3 240.5,733.1 240.6,820.7 240.8,732.8 240.9,791.1 241.0,769.7 241.1,723.5 241.2,810.2 241.4,758.9 241.5,733.8 241.6,740.0 241.8,752.9 241.9,778.5 242.0,683.5 242.1,777.3 242.2,758.4 242.4,716.0 242.5,732.1 242.6,714.6 242.8,698.7 242.9,765.7 243.0,720.0 243.1,754.3 243.2,731.1 243.4,736.3 243.5,755.8 243.6,730.0 243.8,757.0 243.9,646.6 244.0,656.8 244.1,727.1 244.2,773.0 244.4,807.3 244.5,778.7 244.6,692.0 244.8,762.2 244.9,737.9 245.0,741.0 245.1,741.1 245.2,738.6 245.4,735.0 245.5,678.1 245.6,713.6 245.8,658.0 245.9,711.1 246.0,712.2 246.1,658.0 246.2,736.8 246.4,677.1 246.5,743.2 246.6,681.2 246.8,709.9 246.9,699.3 247.0,726.4 247.1,635.4 247.2,693.5 247.4,733.0 247.5,650.6 247.6,733.2 247.8,689.8 247.9,683.2 248.0,707.9 248.1,687.8 248.2,720.3 248.4,693.5 248.5,729.8 248.6,722.6 248.8,719.5 248.9,697.4 249.0,716.3 249.1,660.8 249.2,727.8 249.4,635.4 249.5,704.2 249.6,704.7 249.8,708.6 249.9,673.6 250.0,719.0 250.1,680.6 250.2,708.0 250.4,749.9 250.5,703.7 250.6,647.1 250.8,730.6 250.9,677.2 251.0,737.0 251.1,668.2 251.2,735.5 251.4,721.3 251.5,699.6 251.6,694.6 251.8,708.6 251.9,648.2 252.0,678.0 252.1,717.6 252.2,686.8 252.4,695.5 252.5,690.0 252.6,709.8 252.8,713.5 252.9,698.0 253.0,730.3 253.1,702.9 253.2,621.1 253.4,712.0 253.5,758.6 253.6,704.6 253.8,718.4 253.9,732.2 254.0,702.6 254.1,711.3 254.2,677.1 254.4,656.7 254.5,747.6 254.6,708.9 254.8,748.1 254.9,738.3 255.0,704.6 255.1,686.5 255.2,718.9 255.4,648.3 255.5,754.3 255.6,706.5 255.8,701.8 255.9,732.0 256.0,710.0 256.1,757.0 256.2,741.7 256.4,708.9 256.5,738.3 256.6,701.4 256.8,698.2 256.9,671.1 257.0,694.3 257.1,725.9 257.2,733.1 257.4,695.2 257.5,728.4 257.6,646.4 257.8,711.9 257.9,722.7 258.0,737.6 258.1,714.1 258.2,721.0 258.4,701.6 258.5,734.4 258.6,729.3 258.8,719.8 258.9,726.9 259.0,745.3 259.1,718.1 259.2,721.7 259.4,723.5 259.5,707.6 259.6,750.8 259.8,717.0 259.9,699.8 260.0,715.9 260.1,722.5 260.2,739.9 260.4,732.0 260.5,761.3 260.6,657.2 260.8,708.6 260.9,706.9 261.0,693.9 261.1,720.0 261.2,714.7 261.4,719.0 261.5,751.7 261.6,787.6 261.8,705.1 261.9,690.6 262.0,707.7 262.1,729.9 262.2,706.9 262.4,698.3 262.5,691.0 262.6,715.4 262.8,698.0 262.9,780.1 263.0,701.1 263.1,705.2 263.2,761.6 263.4,731.1 263.5,714.7 263.6,694.9 263.8,706.2 263.9,696.0 264.0,731.2 264.1,732.0 264.2,717.0 264.4,754.2 264.5,763.0 264.6,715.3 264.8,740.0 264.9,734.2 265.0,701.6 265.1,808.4 265.2,743.7 265.4,713.7 265.5,743.9 265.6,694.9 265.8,773.6 265.9,743.6 266.0,754.8 266.1,752.3 266.2,773.5 266.4,742.8 266.5,767.6 266.6,768.2 266.8,723.6 266.9,740.9 267.0,778.1 267.1,742.0 267.2,724.8 267.4,716.1 267.5,738.9 267.6,703.7 267.8,746.8 267.9,761.9 268.0,759.4 268.1,735.7 268.2,814.9 268.4,692.8 268.5,719.6 268.6,758.3 268.8,750.4 268.9,725.0 269.0,691.6 269.1,785.0 269.2,710.1 269.4,731.3 269.5,757.6 269.6,727.6 269.8,767.8 269.9,786.7 270.0,795.3 270.1,679.4 270.2,756.3 270.4,753.1 270.5,745.5 270.6,753.3 270.8,771.5 270.9,718.9 271.0,733.0 271.1,725.7 271.2,779.6 271.4,698.5 271.5,728.2 271.6,705.9 271.8,751.4 271.9,748.6 272.0,777.5 272.1,694.8 272.2,726.5 272.4,771.4 272.5,737.5 272.6,737.3 272.8,732.2 272.9,707.1 273.0,704.1 273.1,722.3 273.2,765.5 273.4,760.7 273.5,759.3 273.6,753.8 273.8,720.2 273.9,749.5 274.0,737.0 274.1,709.9 274.2,746.4 274.4,673.4 274.5,790.5 274.6,711.4 274.8,756.6 274.9,725.1 275.0,732.9 275.1,731.8 275.2,753.0 275.4,722.3 275.5,754.8 275.6,721.7 275.8,746.0 275.9,759.9 276.0,688.2 276.1,722.7 276.2,746.6 276.4,707.8 276.5,700.8 276.6,672.5 276.8,710.9 276.9,699.9 277.0,749.5 277.1,662.5 277.2,735.4 277.4,716.1 277.5,712.0 277.6,693.1 277.8,715.7 277.9,718.7 278.0,713.7 278.1,669.1 278.2,682.0 278.4,694.8 278.5,697.1 278.6,741.0 278.8,725.7 278.9,748.0 279.0,656.1 279.1,763.7 279.2,750.6 279.4,736.7 279.5,726.2 279.6,762.7 279.8,745.1 279.9,686.6 280.0,758.6 280.1,679.9 280.2,697.8 280.4,732.1 280.5,790.2 280.6,730.5 280.8,709.6 280.9,727.7 281.0,718.7 281.1,705.2 281.2,712.7 281.4,654.2 281.5,688.5 281.6,669.6 281.8,701.3 281.9,777.1 282.0,713.9 282.1,700.5 282.2,741.7 282.4,684.6 282.5,700.5 282.6,761.2 282.8,675.8 282.9,691.6 283.0,706.8 283.1,726.8 283.2,672.9 283.4,780.0 283.5,722.5 283.6,668.7 283.8,662.2 283.9,691.0 284.0,655.5 284.1,718.3 284.2,733.8 284.4,644.7 284.5,666.3 284.6,703.0 284.8,676.1 284.9,692.7 285.0,705.8 285.1,689.2 285.2,666.1 285.4,741.2 285.5,721.3 285.6,708.3 285.8,725.4 285.9,706.2 286.0,746.4 286.1,718.3 286.2,685.0 286.4,713.1 286.5,707.9 286.6,687.6 286.8,657.4 286.9,724.9 287.0,725.2 287.1,682.4 287.2,690.9 287.4,742.4 287.5,733.5 287.6,723.9 287.8,709.6 287.9,709.7 288.0,684.1 288.1,660.5 288.2,677.2 288.4,727.8 288.5,727.7 288.6,737.3 288.8,736.1 288.9,682.5 289.0,700.0 289.1,775.0 289.2,714.2 289.4,681.8 289.5,759.0 289.6,697.0 289.8,661.1 289.9,771.5 290.0,735.0 290.1,750.9 290.2,709.1 290.4,710.7 290.5,677.8 290.6,712.8 290.8,725.9 290.9,722.9 291.0,686.6 291.1,749.7 291.2,728.8 291.4,741.3 291.5,733.6 291.6,687.2 291.8,740.6 291.9,691.6 292.0,745.8 292.1,756.2 292.2,766.4 292.4,642.1 292.5,726.5 292.6,688.7 292.8,732.1 292.9,721.4 293.0,752.6 293.1,693.9 293.2,708.2 293.4,749.8 293.5,706.7 293.6,694.9 293.8,696.5 293.9,719.8 294.0,697.3 294.1,701.1 294.2,728.4 294.4,782.1 294.5,760.4 294.6,690.0 294.8,754.1 294.9,735.4 295.0,739.2 295.1,753.7 295.2,683.7 295.4,751.4 295.5,691.0 295.6,732.5 295.8,744.9 295.9,733.4 296.0,774.9 296.1,730.2 296.2,720.3 296.4,734.7 296.5,735.2 296.6,760.2 296.8,718.9 296.9,760.1 297.0,753.6 297.1,762.3 297.2,696.0 297.4,734.4 297.5,748.6 297.6,703.6 297.8,750.7 297.9,774.7 298.0,733.4 298.1,724.0 298.2,710.9 298.4,794.9 298.5,761.0 298.6,705.9 298.8,724.3 298.9,744.3 299.0,791.3 299.1,742.3 299.2,762.0 299.4,771.5 299.5,733.3 299.6,767.4 299.8,736.3 299.9,715.6 300.0,752.8 300.1,711.5 300.2,699.6 300.4,701.8 300.5,767.5 300.6,775.5 300.8,766.7 300.9,781.0 301.0,760.6 301.1,731.7 301.2,736.2 301.4,724.8 301.5,695.8 301.6,747.5 301.8,764.3 301.9,767.5 302.0,769.6 302.1,722.7 302.2,694.3 302.4,725.6 302.5,747.5 302.6,730.8 302.8,703.3 302.9,747.9 303.0,713.7 303.1,732.7 303.2,749.1 303.4,703.5 303.5,704.2 303.6,733.3 303.8,755.8 303.9,768.9 304.0,757.2 304.1,692.7 304.2,726.3 304.4,724.3 304.5,713.1 304.6,727.9 304.8,718.7 304.9,752.1 305.0,689.9 305.1,754.5 305.2,703.9 305.4,800.1 305.5,752.7 305.6,761.8 305.8,710.1 305.9,765.4 306.0,764.8 306.1,705.5 306.2,680.2 306.4,698.5 306.5,659.0 306.6,696.0 306.8,754.6 306.9,783.0 307.0,740.4 307.1,743.6 307.2,752.3 307.4,720.6 307.5,673.9 307.6,688.7 307.8,708.8 307.9,700.4 308.0,738.9 308.1,678.0 308.2,737.8 308.4,703.0 308.5,737.6 308.6,728.2 308.8,693.5 308.9,667.5 309.0,756.6 309.1,700.9 309.2,631.9 309.4,698.2 309.5,697.2 309.6,678.9 309.8,699.9 309.9,688.4 310.0,704.5 310.1,745.0 310.2,696.0 310.4,711.3 310.5,664.8 310.6,753.9 310.8,737.8 310.9,650.5 311.0,715.3 311.1,663.0 311.2,724.6 311.4,676.2 311.5,745.9 311.6,747.7 311.8,711.7 311.9,695.5 312.0,714.9 312.1,658.9 312.2,722.5 312.4,678.2 312.5,721.9 312.6,729.3 312.8,682.8 312.9,724.3 313.0,763.0 313.1,698.2 313.2,677.2 313.4,694.5 313.5,724.1 313.6,741.3 313.8,732.7 313.9,692.3 314.0,651.6 314.1,737.4 314.2,705.7 314.4,672.5 314.5,689.7 314.6,702.7 314.8,719.7 314.9,681.0 315.0,708.4 315.1,718.9 315.2,756.9 315.4,687.3 315.5,689.2 315.6,690.1 315.8,727.3 315.9,674.0 316.0,686.0 316.1,711.6 316.2,742.5 316.4,693.9 316.5,676.7 316.6,763.8 316.8,691.4 316.9,715.9 317.0,710.4 317.1,698.5 317.2,677.9 317.4,700.6 317.5,743.7 317.6,691.7 317.8,693.9 317.9,712.9 318.0,663.7 318.1,718.1 318.2,679.5 318.4,676.1 318.5,701.3 318.6,702.0 318.8,718.8 318.9,723.9 319.0,726.7 319.1,737.5 319.2,724.4 319.4,733.8 319.5,722.4 319.6,721.4 319.8,680.0 319.9,753.2 320.0,741.5 320.1,682.8 320.2,681.2 320.4,692.9 320.5,710.6 320.6,642.7 320.8,711.7 320.9,712.5 321.0,683.7 321.1,746.1 321.2,727.8 321.4,727.7 321.5,763.3 321.6,703.1 321.8,674.0 321.9,698.7 322.0,734.1 322.1,730.1 322.2,752.3 322.4,726.9 322.5,712.4 322.6,759.6 322.8,699.3 322.9,766.9 323.0,744.6 323.1,725.6 323.2,700.9 323.4,728.1 323.5,764.9 323.6,767.7 323.8,724.4 323.9,719.9 324.0,717.7 324.1,775.0 324.2,716.9 324.4,709.3 324.5,758.1 324.6,756.6 324.8,711.9 324.9,758.7 325.0,713.8 325.1,687.0 325.2,752.8 325.4,721.9 325.5,719.9 325.6,717.1 325.8,722.6 325.9,723.1 326.0,749.2 326.1,737.1 326.2,716.4 326.4,695.8 326.5,715.8 326.6,692.8 326.8,712.4 326.9,734.2 327.0,716.0 327.1,708.9 327.2,786.0 327.4,734.0 327.5,790.5 327.6,716.3 327.8,702.5 327.9,725.0 328.0,714.7 328.1,729.9 328.2,721.8 328.4,751.4 328.5,663.6 328.6,709.5 328.8,700.8 328.9,737.0 329.0,716.7 329.1,708.4 329.2,733.8 329.4,753.5 329.5,702.3 329.6,761.6 329.8,726.8 329.9,727.6 330.0,779.8 330.1,708.2 330.2,728.1 330.4,754.2 330.5,712.9 330.6,769.4 330.8,705.1 330.9,732.2 331.0,747.3 331.1,702.8 331.2,737.3 331.4,753.7 331.5,730.4 331.6,734.4 331.8,785.0 331.9,749.7 332.0,744.3 332.1,692.3 332.2,715.2 332.4,762.2 332.5,733.7 332.6,734.7 332.8,699.4 332.9,706.8 333.0,735.0 333.1,739.6 333.2,778.1 333.4,784.2 333.5,756.8 333.6,664.8 333.8,730.5 333.9,752.6 334.0,712.4 334.1,682.2 334.2,735.0 334.4,725.6 334.5,688.8 334.6,727.4 334.8,739.1 334.9,747.4 335.0,708.1 335.1,745.0 335.2,729.7 335.4,707.9 335.5,757.4 335.6,768.6 335.8,721.1 335.9,736.3 336.0,744.5 336.1,745.6 336.2,690.0 336.4,704.1 336.5,719.4 336.6,714.1 336.8,715.0 336.9,725.6 337.0,752.2 337.1,720.2 337.2,684.3 337.4,646.6 337.5,712.1 337.6,717.0 337.8,737.3 337.9,685.3 338.0,761.9 338.1,736.1 338.2,747.7 338.4,733.1 338.5,703.9 338.6,718.9 338.8,741.9 338.9,711.3 339.0,682.4 339.1,720.0 339.2,766.0 339.4,714.6 339.5,671.2 339.6,716.9 339.8,697.0 339.9,708.9 340.0,706.0 340.1,705.3 340.2,642.0 340.4,695.5 340.5,751.3 340.6,684.5 340.8,711.6 340.9,689.9 341.0,697.2 341.1,710.3 341.2,702.0 341.4,716.0 341.5,739.2 341.6,703.5 341.8,743.9 341.9,723.1 342.0,666.1 342.1,665.0 342.2,700.0 342.4,684.9 342.5,686.4 342.6,699.2 342.8,733.7 342.9,722.0 343.0,653.5 343.1,720.3 343.2,720.0 343.4,684.8 343.5,727.7 343.6,704.8 343.8,730.7 343.9,671.4 344.0,692.8 344.1,634.5 344.2,671.5 344.4,732.5 344.5,721.8 344.6,799.0 344.8,733.4 344.9,699.5 345.0,733.2 345.1,744.0 345.2,722.6 345.4,696.1 345.5,657.6 345.6,704.7 345.8,709.3 345.9,714.9 346.0,737.8 346.1,682.2 346.2,686.9 346.4,722.1 346.5,664.9 346.6,680.3 346.8,681.5 346.9,733.1 347.0,711.0 347.1,730.5 347.2,711.4 347.4,692.5 347.5,664.9 347.6,675.1 347.8,690.9 347.9,741.1 348.0,740.4 348.1,717.2 348.2,703.8 348.4,719.5 348.5,704.6 348.6,692.2 348.8,675.2 348.9,712.9 349.0,716.1 349.1,733.7 349.2,691.4 349.4,757.3 349.5,789.6 349.6,650.9 349.8,663.0 349.9,716.5 350.0,750.4 350.1,654.0 350.2,676.6 350.4,721.4 350.5,740.2 350.6,683.4 350.8,721.0 350.9,702.3 351.0,725.3 351.1,689.4 351.2,752.6 351.4,713.3 351.5,680.3 351.6,736.8 351.8,750.5 351.9,709.0 352.0,708.6 352.1,759.7 352.2,745.1 352.4,707.2 352.5,724.0 352.6,764.1 352.8,731.8 352.9,709.6 353.0,720.0 353.1,717.8 353.2,735.5 353.4,779.4 353.5,731.7 353.6,728.8 353.8,738.8 353.9,710.3 354.0,694.5 354.1,704.8 354.2,694.1 354.4,772.5 354.5,720.7 354.6,749.9 354.8,732.3 354.9,754.2 355.0,759.1 355.1,690.4 355.2,691.6 355.4,727.0 355.5,745.8 355.6,702.9 355.8,730.5 355.9,714.2 356.0,702.3 356.1,741.4 356.2,724.6 356.4,694.2 356.5,710.3 356.6,758.5 356.8,782.1 356.9,763.5 357.0,712.3 357.1,758.4 357.2,752.3 357.4,743.9 357.5,695.8 357.6,676.1 357.8,736.3 357.9,702.2 358.0,735.8 358.1,725.1 358.2,742.0 358.4,708.8 358.5,737.3 358.6,674.4 358.8,757.6 358.9,678.4 359.0,774.2 359.1,792.7 359.2,745.8 359.4,738.8 359.5,733.4 359.6,730.8 359.8,733.8 359.9,733.6 360.0,739.0 360.1,706.8 360.2,750.1 360.4,756.9 360.5,780.7 360.6,715.2 360.8,705.0 360.9,712.7 361.0,736.2 361.1,737.8 361.2,734.4 361.4,775.4 361.5,759.2 361.6,754.1 361.8,717.9 361.9,708.8 362.0,769.7 362.1,658.1 362.2,721.7 362.4,797.8 362.5,726.4 362.6,713.1 362.8,748.7 362.9,727.7 363.0,776.7 363.1,732.4 363.2,742.3 363.4,719.5 363.5,715.8 363.6,732.6 363.8,820.7 363.9,729.1 364.0,740.3 364.1,756.3 364.2,736.5 364.4,714.8 364.5,731.5 364.6,735.8 364.8,690.8 364.9,759.1 365.0,743.3 365.1,696.5 365.2,697.1 365.4,701.9 365.5,670.3 365.6,683.6 365.8,765.0 365.9,708.0 366.0,668.3 366.1,742.3 366.2,710.6 366.4,763.7 366.5,752.2 366.6,701.4 366.8,725.5 366.9,751.0 367.0,688.0 367.1,739.5 367.2,709.6 367.4,731.2 367.5,758.0 367.6,722.1 367.8,733.3 367.9,686.6 368.0,749.1 368.1,720.8 368.2,722.9 368.4,685.2 368.5,736.6 368.6,705.2 368.8,688.4 368.9,708.4 369.0,724.7 369.1,731.1 369.2,704.2 369.4,725.9 369.5,708.8 369.6,709.9 369.8,708.1 369.9,731.9 370.0,673.0 370.1,696.9 370.2,711.7 370.4,685.9 370.5,733.8 370.6,722.6 370.8,689.1 370.9,731.5 371.0,739.7 371.1,742.2 371.2,756.0 371.4,724.3 371.5,714.8 371.6,692.3 371.8,761.2 371.9,692.8 372.0,740.6 372.1,703.0 372.2,663.3 372.4,741.2 372.5,663.3 372.6,720.8 372.8,719.7 372.9,733.0 373.0,700.5 373.1,648.5 373.2,748.5 373.4,769.9 373.5,700.8 373.6,639.4 373.8,692.0 373.9,658.4 374.0,754.9 374.1,683.0 374.2,722.5 374.4,719.8 374.5,697.5 374.6,721.6 374.8,708.0 374.9,744.4 375.0,705.7 375.1,761.5 375.2,665.4 375.4,658.5 375.5,702.1 375.6,755.5 375.8,665.7 375.9,712.0 376.0,697.4 376.1,736.9 376.2,671.8 376.4,715.5 376.5,709.2 376.6,705.2 376.8,716.6 376.9,696.4 377.0,669.2 377.1,702.8 377.2,692.6 377.4,699.0 377.5,685.4 377.6,709.5 377.8,729.7 377.9,665.5 378.0,649.7 378.1,693.4 378.2,717.4 378.4,704.9 378.5,686.1 378.6,692.8 378.8,726.0 378.9,737.4 379.0,712.0 379.1,698.2 379.2,712.7 379.4,730.7 379.5,738.4 379.6,701.0 379.8,772.4 379.9,740.1 380.0,692.5 380.1,769.0 380.2,717.6 380.4,671.1 380.5,734.7 380.6,756.4 380.8,770.0 380.9,681.0 381.0,773.4 381.1,707.6 381.2,760.4 381.4,707.8 381.5,712.2 381.6,695.8 381.8,756.4 381.9,727.2 382.0,773.6" fill="none" stroke="#b02f3b" stroke-width="1" stroke-opacity="0.88"/><rect x="76.5" y="512.5" width="306" height="420" fill="none" stroke="#6e6e6e" stroke-width="1"/></svg>
<div class="t" style="left:211.15px;top:499.24px;font-size:12.24px;color:#000;transform-origin:0 10.36px;transform:scale(1,1.06);">Scope</div>
<div class="t" style="left:39.82px;top:505.52px;font-size:13.80px;color:#000;transform-origin:0 11.68px;transform:scale(1,1.06);">1,0m</div>
<div class="t" style="left:39.80px;top:547.52px;font-size:13.80px;color:#000;transform-origin:0 11.68px;transform:scale(1,1.06);">800u</div>
<div class="t" style="left:39.80px;top:589.52px;font-size:13.80px;color:#000;transform-origin:0 11.68px;transform:scale(1,1.06);">600u</div>
<div class="t" style="left:39.80px;top:631.52px;font-size:13.80px;color:#000;transform-origin:0 11.68px;transform:scale(1,1.06);">400u</div>
<div class="t" style="left:39.80px;top:673.52px;font-size:13.80px;color:#000;transform-origin:0 11.68px;transform:scale(1,1.06);">200u</div>
<div class="t" style="left:62.82px;top:715.52px;font-size:13.80px;color:#000;transform-origin:0 11.68px;transform:scale(1,1.06);">0</div>
<div class="t" style="left:35.20px;top:757.52px;font-size:13.80px;color:#000;transform-origin:0 11.68px;transform:scale(1,1.06);">-200u</div>
<div class="t" style="left:35.20px;top:799.52px;font-size:13.80px;color:#000;transform-origin:0 11.68px;transform:scale(1,1.06);">-400u</div>
<div class="t" style="left:35.20px;top:841.52px;font-size:13.80px;color:#000;transform-origin:0 11.68px;transform:scale(1,1.06);">-600u</div>
<div class="t" style="left:35.20px;top:883.52px;font-size:13.80px;color:#000;transform-origin:0 11.68px;transform:scale(1,1.06);">-800u</div>
<div class="t" style="left:35.22px;top:925.52px;font-size:13.80px;color:#000;transform-origin:0 11.68px;transform:scale(1,1.06);">-1,0m</div>
<div class="t" style="left:72.16px;top:938.02px;font-size:13.80px;color:#000;transform-origin:0 11.68px;transform:scale(1,1.06);">0</div>
<div class="t" style="left:139.08px;top:938.02px;font-size:13.80px;color:#000;transform-origin:0 11.68px;transform:scale(1,1.06);">50m</div>
<div class="t" style="left:211.34px;top:938.02px;font-size:13.80px;color:#000;transform-origin:0 11.68px;transform:scale(1,1.06);">100m</div>
<div class="t" style="left:287.14px;top:938.02px;font-size:13.80px;color:#000;transform-origin:0 11.68px;transform:scale(1,1.06);">150m</div>
<div class="t" style="left:201.95px;top:953.33px;font-size:14.14px;color:#000;transform-origin:0 11.97px;transform:scale(1,1.06);">Time (s)</div>
<div class="t" style="left:-52.22px;top:710.13px;font-size:14.85px;color:#000;transform-origin:0 12.57px;transform:scale(1,1.06);transform-origin:50% 84.67%;transform:rotate(-90deg);">Instantaneous Level (V)</div>
<div class="b" style="left:409.5px;top:518.5px;width:3px;height:3px;background:#aebcc6;border-radius:50%;"></div>
<div class="b" style="left:409.5px;top:524.5px;width:3px;height:3px;background:#aebcc6;border-radius:50%;"></div>
<div class="b" style="left:409.5px;top:530.5px;width:3px;height:3px;background:#aebcc6;border-radius:50%;"></div>
<div class="b" style="left:424px;top:116px;width:163px;height:37px;background:linear-gradient(#c9e0ee,#b2d3e8 60%,#a8cde5);box-sizing:border-box;border:2px solid #3c5a68;border-radius:5px;"></div>
<svg class="b" style="left:473px;top:127px;" width="13" height="14" viewBox="0 0 13 14"><path d="M1 1 L12 7 L1 13 Z" fill="#2f4a5c"/></svg>
<div class="t" style="left:491.90px;top:126.41px;font-size:17.47px;color:#2f4a5c;transform-origin:0 14.79px;transform:scale(1,1.05);font-weight:bold;">Start</div>
<div class="b" style="left:421px;top:166px;width:420px;height:1px;background:#9fa2a4;"></div>
<div class="b" style="left:421px;top:167px;width:420px;height:1px;background:#fbfcfc;"></div>
<svg class="b" style="left:425px;top:185.5px;" width="6" height="6" viewBox="0 0 6 6"><circle cx="3" cy="3" r="2.3" fill="#000"/></svg>
<div class="t" style="left:437.70px;top:179.75px;font-size:16.59px;color:#000;transform-origin:0 14.05px;transform:scale(1,1.05);font-weight:bold;">Generator</div>
<div class="t" style="left:502.40px;top:214.43px;font-size:14.84px;color:#000;transform-origin:0 12.57px;transform:scale(1,1.06);">Waveform:</div>
<div class="b" style="left:585px;top:206px;width:159px;height:28px;background:linear-gradient(#f3f3f3,#ebebeb 45%,#dddddd 55%,#d3d3d3);box-sizing:border-box;border:1px solid #7f7f7f;border-radius:3px;"></div>
<svg class="b" style="left:729px;top:217.0px;" width="10" height="6" viewBox="0 0 10 6"><path d="M0.5 0.5 H9.5 L5 5.5 Z" fill="#000"/></svg>
<div class="t" style="left:589.20px;top:215.38px;font-size:13.49px;color:#000;transform-origin:0 11.42px;transform:scale(1,1.06);">Sine</div>
<div class="b" style="left:424px;top:238px;width:411px;height:91px;box-sizing:border-box;border:1px solid #98a4aa;"></div>
<div class="b" style="left:585px;top:249px;width:16px;height:16px;background:linear-gradient(#f4f4f4,#dcdcdc);box-sizing:border-box;border:1px solid #8e8f8f;"></div>
<svg class="b" style="left:587px;top:251px;" width="12" height="12" viewBox="0 0 12 12"><path d="M2 6.5 L5 10 L10 2" fill="none" stroke="#3a4f8a" stroke-width="1.8"/></svg>
<div class="t" style="left:608.60px;top:252.31px;font-size:13.81px;color:#000;transform-origin:0 11.69px;transform:scale(1,1.06);">Levels Track Ch1</div>
<div class="t" style="left:589.40px;top:278.42px;font-size:13.68px;color:#000;transform-origin:0 11.58px;transform:scale(1,1.06);">Level</div>
<div class="t" style="left:726.70px;top:277.76px;font-size:14.46px;color:#000;transform-origin:0 12.24px;transform:scale(1,1.06);">DC Offset</div>
<div class="t" style="left:544.60px;top:304.38px;font-size:13.73px;color:#000;transform-origin:0 11.62px;transform:scale(1,1.06);">Ch1:</div>
<div class="b" style="left:585px;top:297px;width:112px;height:27px;background:#fff;"></div>
<svg class="b" style="left:683px;top:308px;" width="10" height="6" viewBox="0 0 10 6"><path d="M0.5 0.5 H9.5 L5 5.5 Z" fill="#000"/></svg>
<div class="t" style="left:589.40px;top:304.22px;font-size:13.79px;color:#000;transform-origin:0 11.68px;transform:scale(1,1.12);">1,000 Vrms</div>
<svg class="b" style="left:699px;top:296px;" width="17" height="14" viewBox="0 0 17 14"><rect x="0.5" y="0.5" width="16" height="13" rx="2.5" fill="#7393a4" stroke="#3d5866" stroke-width="1"/><path d="M3.2 11.3 L8.5 2.6 L13.8 11.3 Z" fill="#fff"/></svg>
<svg class="b" style="left:699px;top:310.5px;" width="17" height="14" viewBox="0 0 17 14"><rect x="0.5" y="0.5" width="16" height="13" rx="2.5" fill="#7393a4" stroke="#3d5866" stroke-width="1"/><path d="M3.2 2.7 L8.5 11.2 L13.8 2.7 Z" fill="#fff"/></svg>
<div class="b" style="left:722px;top:297px;width:87px;height:27px;background:#fff;box-sizing:border-box;border:1px solid #fff;border-top-color:#5f8fc0;border-left-color:#9cb8d6;"></div>
<div class="t" style="left:725.50px;top:304.36px;font-size:13.63px;color:#000;transform-origin:0 11.54px;transform:scale(1,1.13);">0,000 V</div>
<svg class="b" style="left:811px;top:296px;" width="17" height="14" viewBox="0 0 17 14"><rect x="0.5" y="0.5" width="16" height="13" rx="2.5" fill="#7393a4" stroke="#3d5866" stroke-width="1"/><path d="M3.2 11.3 L8.5 2.6 L13.8 11.3 Z" fill="#fff"/></svg>
<svg class="b" style="left:811px;top:310.5px;" width="17" height="14" viewBox="0 0 17 14"><rect x="0.5" y="0.5" width="16" height="13" rx="2.5" fill="#7393a4" stroke="#3d5866" stroke-width="1"/><path d="M3.2 2.7 L8.5 11.2 L13.8 2.7 Z" fill="#fff"/></svg>
<div class="t" style="left:504.80px;top:341.36px;font-size:13.75px;color:#000;transform-origin:0 11.64px;transform:scale(1,1.06);">Frequency:</div>
<div class="b" style="left:585px;top:333px;width:112px;height:27px;background:#fff;"></div>
<svg class="b" style="left:683px;top:344px;" width="10" height="6" viewBox="0 0 10 6"><path d="M0.5 0.5 H9.5 L5 5.5 Z" fill="#000"/></svg>
<div class="t" style="left:589.40px;top:339.66px;font-size:13.98px;color:#000;transform-origin:0 11.84px;transform:scale(1,1.12);">1,00000 kHz</div>
<svg class="b" style="left:699px;top:333px;" width="17" height="14" viewBox="0 0 17 14"><rect x="0.5" y="0.5" width="16" height="13" rx="2.5" fill="#7393a4" stroke="#3d5866" stroke-width="1"/><path d="M3.2 11.3 L8.5 2.6 L13.8 11.3 Z" fill="#fff"/></svg>
<svg class="b" style="left:699px;top:347.5px;" width="17" height="14" viewBox="0 0 17 14"><rect x="0.5" y="0.5" width="16" height="13" rx="2.5" fill="#7393a4" stroke="#3d5866" stroke-width="1"/><path d="M3.2 2.7 L8.5 11.2 L13.8 2.7 Z" fill="#fff"/></svg>
<div class="t" style="left:425.00px;top:377.38px;font-size:13.72px;color:#000;transform-origin:0 11.62px;transform:scale(1,1.06);">Channels:</div>
<div class="b" style="left:421px;top:398px;width:15px;height:16px;background:linear-gradient(#6a8fa2,#4c7084);box-sizing:border-box;border:1px solid #3a5a6a;border-radius:2px;"></div>
<div class="t" style="left:425.30px;top:402.26px;font-size:11.50px;color:#fff;font-weight:bold;">1</div>
<div class="b" style="left:436px;top:398px;width:15px;height:16px;background:linear-gradient(#6a8fa2,#4c7084);box-sizing:border-box;border:1px solid #3a5a6a;border-radius:2px;"></div>
<div class="t" style="left:440.30px;top:402.26px;font-size:11.50px;color:#fff;font-weight:bold;">2</div>
<div class="b" style="left:421px;top:428px;width:420px;height:1px;background:#9fa2a4;"></div>
<div class="b" style="left:421px;top:429px;width:420px;height:1px;background:#fbfcfc;"></div>
<svg class="b" style="left:425px;top:448px;" width="6" height="6" viewBox="0 0 6 6"><circle cx="3" cy="3" r="2.3" fill="#000"/></svg>
<div class="t" style="left:437.50px;top:441.85px;font-size:16.36px;color:#000;transform-origin:0 13.85px;transform:scale(1,1.05);font-weight:bold;">Analyzer</div>
<div class="t" style="left:467.50px;top:475.41px;font-size:14.63px;color:#000;transform-origin:0 12.39px;transform:scale(1,1.06);">High-pass Filter:</div>
<div class="b" style="left:585px;top:467px;width:138px;height:28px;background:linear-gradient(#f3f3f3,#ebebeb 45%,#dddddd 55%,#d3d3d3);box-sizing:border-box;border:1px solid #7f7f7f;border-radius:3px;"></div>
<svg class="b" style="left:708px;top:478.0px;" width="10" height="6" viewBox="0 0 10 6"><path d="M0.5 0.5 H9.5 L5 5.5 Z" fill="#000"/></svg>
<div class="t" style="left:589.20px;top:473.96px;font-size:15.40px;color:#000;transform-origin:0 13.04px;transform:scale(1,1.06);">Elliptic</div>
<div class="b" style="left:729px;top:468px;width:92px;height:27px;background:#fff;"></div>
<div class="t" style="left:732.00px;top:474.68px;font-size:14.55px;color:#000;transform-origin:0 12.32px;transform:scale(1,1.1);">20 Hz</div>
<div class="t" style="left:472.20px;top:510.59px;font-size:14.42px;color:#000;transform-origin:0 12.21px;transform:scale(1,1.06);">Low-pass Filter:</div>
<div class="b" style="left:585px;top:502px;width:138px;height:28px;background:linear-gradient(#f3f3f3,#ebebeb 45%,#dddddd 55%,#d3d3d3);box-sizing:border-box;border:1px solid #7f7f7f;border-radius:3px;"></div>
<svg class="b" style="left:708px;top:513.0px;" width="10" height="6" viewBox="0 0 10 6"><path d="M0.5 0.5 H9.5 L5 5.5 Z" fill="#000"/></svg>
<div class="t" style="left:589.20px;top:508.96px;font-size:15.40px;color:#000;transform-origin:0 13.04px;transform:scale(1,1.06);">Elliptic</div>
<div class="b" style="left:729px;top:503px;width:92px;height:27px;background:#fff;"></div>
<div class="t" style="left:732.00px;top:509.65px;font-size:14.59px;color:#000;transform-origin:0 12.35px;transform:scale(1,1.1);">20 kHz</div>
<div class="t" style="left:502.80px;top:545.79px;font-size:15.13px;color:#000;transform-origin:0 12.81px;transform:scale(1,1.06);">Weighting:</div>
<div class="b" style="left:585px;top:538px;width:138px;height:28px;background:linear-gradient(#f3f3f3,#ebebeb 45%,#dddddd 55%,#d3d3d3);box-sizing:border-box;border:1px solid #7f7f7f;border-radius:3px;"></div>
<svg class="b" style="left:708px;top:549.0px;" width="10" height="6" viewBox="0 0 10 6"><path d="M0.5 0.5 H9.5 L5 5.5 Z" fill="#000"/></svg>
<div class="t" style="left:589.20px;top:545.97px;font-size:14.21px;color:#000;transform-origin:0 12.03px;transform:scale(1,1.06);">Signal Path</div>
<div class="b" style="left:421px;top:584px;width:420px;height:1px;background:#9fa2a4;"></div>
<div class="b" style="left:421px;top:585px;width:420px;height:1px;background:#fbfcfc;"></div>
<div class="b" style="left:422px;top:599px;width:200px;height:35px;background:linear-gradient(#f3f3f3,#ebebeb 45%,#dddddd 55%,#d3d3d3);box-sizing:border-box;border:1px solid #7f7f7f;border-radius:3px;"></div>
<div class="t" style="left:455.50px;top:610.86px;font-size:14.34px;color:#000;transform-origin:0 12.14px;transform:scale(1,1.06);">Advanced Settings...</div>
<svg class="b" style="left:850px;top:111px;" width="16" height="16" viewBox="0 0 16 16"><rect x="0" y="0" width="16" height="16" fill="#2f4a5c"/><path d="M2 1.5 H12.5 L14 3 V15 H2 Z" fill="#fff"/><rect x="5" y="1.5" width="6" height="5" fill="#2f4a5c"/><rect x="8" y="2.3" width="2" height="2.8" fill="#fff"/><rect x="4.5" y="8.5" width="7" height="6.5" fill="#2f4a5c"/><path d="M5 11 H11 L8 14.3 Z" fill="#fff"/><rect x="7.1" y="8.5" width="1.8" height="3" fill="#fff"/></svg>
<svg class="b" style="left:873px;top:111px;" width="16" height="16" viewBox="0 0 16 16"><rect x="0" y="0" width="16" height="16" fill="#2f4a5c"/><path d="M2 5 L5 2 H9 V11 H2 Z" fill="#fff"/><path d="M2 5 H5 V2" fill="none" stroke="#2f4a5c" stroke-width="0.8"/><path d="M7 8 L10 5 H14 V15 H7 Z" fill="#fff" stroke="#2f4a5c" stroke-width="0.8"/></svg>
<svg class="b" style="left:896px;top:111px;" width="16" height="16" viewBox="0 0 16 16"><rect x="0" y="0" width="16" height="16" fill="#2f4a5c"/><rect x="4" y="1.5" width="8" height="4" fill="#fff"/><rect x="1.5" y="6" width="13" height="6" rx="1" fill="#fff"/><rect x="3.5" y="10" width="9" height="1" fill="#2f4a5c"/><rect x="4" y="11.5" width="8" height="3.5" fill="#fff"/><rect x="5" y="12.5" width="6" height="0.8" fill="#2f4a5c"/></svg>
<div class="b" style="left:919px;top:111px;width:1px;height:18px;background:#b8c0c4;"></div>
<div class="b" style="left:920px;top:111px;width:1px;height:18px;background:#fff;"></div>
<svg class="b" style="left:925px;top:111px;" width="16" height="16" viewBox="0 0 16 16"><rect x="0" y="0" width="16" height="16" fill="#2f4a5c"/><circle cx="6.5" cy="6.5" r="4.3" fill="none" stroke="#fff" stroke-width="1.5"/><path d="M9.5 9.5 L14.5 14.5" stroke="#fff" stroke-width="2.2"/><path d="M4.3 6.5 H8.7 M6.5 4.3 V8.7" stroke="#fff" stroke-width="1"/></svg>
<svg class="b" style="left:948px;top:111px;" width="16" height="16" viewBox="0 0 16 16"><rect x="0" y="0" width="16" height="16" fill="#2f4a5c"/><path d="M8 1 L10.5 4 H9 V7 H12 V5.5 L15 8 L12 10.5 V9 H9 V12 H10.5 L8 15 L5.5 12 H7 V9 H4 V10.5 L1 8 L4 5.5 V7 H7 V4 H5.5 Z" fill="#fff"/></svg>
<svg class="b" style="left:971px;top:111px;" width="16" height="16" viewBox="0 0 16 16"><rect x="0" y="0" width="16" height="16" fill="#2f4a5c"/><path d="M1.5 1.5 H6 L4.5 3 L7 5.5 L5.5 7 L3 4.5 L1.5 6 Z" fill="#fff"/><path d="M14.5 1.5 V6 L13 4.5 L10.5 7 L9 5.5 L11.5 3 L10 1.5 Z" fill="#fff"/><path d="M1.5 14.5 V10 L3 11.5 L5.5 9 L7 10.5 L4.5 13 L6 14.5 Z" fill="#fff"/><path d="M14.5 14.5 H10 L11.5 13 L9 10.5 L10.5 9 L13 11.5 L14.5 10 Z" fill="#fff"/></svg>
<div class="b" style="left:994px;top:111px;width:1px;height:18px;background:#b8c0c4;"></div>
<div class="b" style="left:995px;top:111px;width:1px;height:18px;background:#fff;"></div>
<svg class="b" style="left:1000px;top:111px;" width="16" height="16" viewBox="0 0 16 16"><rect x="0" y="0" width="16" height="16" fill="#2f4a5c"/><rect x="1" y="1.8" width="14" height="13.4" fill="#fff"/><rect x="2.2" y="5" width="2.2" height="2" fill="#2f4a5c"/><rect x="5.6" y="5" width="2.2" height="2" fill="#2f4a5c"/><rect x="9.2" y="5" width="2.2" height="2" fill="#2f4a5c"/><rect x="12.6" y="5" width="2.2" height="2" fill="#2f4a5c"/><rect x="2.2" y="8" width="2.2" height="2" fill="#2f4a5c"/><rect x="5.6" y="8" width="2.2" height="2" fill="#2f4a5c"/><rect x="9.2" y="8" width="2.2" height="2" fill="#2f4a5c"/><rect x="12.6" y="8" width="2.2" height="2" fill="#2f4a5c"/><rect x="2.2" y="11" width="2.2" height="2" fill="#2f4a5c"/><rect x="5.6" y="11" width="2.2" height="2" fill="#2f4a5c"/><rect x="9.2" y="11" width="2.2" height="2" fill="#2f4a5c"/><rect x="12.6" y="11" width="2.2" height="2" fill="#2f4a5c"/></svg>
<svg class="b" style="left:1022px;top:111px;" width="16" height="16" viewBox="0 0 16 16"><rect x="0" y="0" width="16" height="16" fill="#2f4a5c"/><rect x="1" y="3" width="14" height="2.2" fill="#fff"/><rect x="1" y="5.2" width="14" height="3.3" fill="#5d6c9a"/><rect x="1" y="8.5" width="14" height="2.8" fill="#4d7d8a"/><rect x="1" y="11.3" width="14" height="2.2" fill="#fff"/><path d="M1.5 11 L5.5 6.3 L9.5 11 L14.5 5" fill="none" stroke="#fff" stroke-width="1"/></svg>
<svg class="b" style="left:1040px;top:117px;" width="7" height="4" viewBox="0 0 7 4"><path d="M0 0 H6 L3 3.5 Z" fill="#000"/></svg>
<svg class="b" style="left:1052px;top:111px;" width="16" height="16" viewBox="0 0 16 16"><rect x="0" y="0" width="16" height="16" fill="#2f4a5c"/><path d="M2.5 13.8 Q4.6 14 5.4 10.5 L6.9 4.6 Q7.6 2.3 9.8 2.8" fill="none" stroke="#fff" stroke-width="1.3"/><path d="M4.3 7 H8.6" stroke="#fff" stroke-width="1.1"/><path d="M8.6 8.2 L13 13 M13 8.2 L8.6 13" stroke="#fff" stroke-width="1.2"/></svg>
<svg class="b" style="left:1070px;top:117px;" width="7" height="4" viewBox="0 0 7 4"><path d="M0 0 H6 L3 3.5 Z" fill="#000"/></svg>
<svg class="b" style="left:1083px;top:111px;" width="16" height="16" viewBox="0 0 16 16"><rect x="0" y="0" width="16" height="16" fill="#2f4a5c"/><polygon points="14.13,7.09 14.19,8.30 12.46,9.12 12.16,9.97 12.98,11.69 12.16,12.59 10.36,11.95 9.55,12.33 8.91,14.13 7.70,14.19 6.88,12.46 6.03,12.16 4.31,12.98 3.41,12.16 4.05,10.36 3.67,9.55 1.87,8.91 1.81,7.70 3.54,6.88 3.84,6.03 3.02,4.31 3.84,3.41 5.64,4.05 6.45,3.67 7.09,1.87 8.30,1.81 9.12,3.54 9.97,3.84 11.69,3.02 12.59,3.84 11.95,5.64 12.33,6.45" fill="#fff"/><circle cx="8" cy="8" r="2.2" fill="#2f4a5c"/></svg>
<div class="b" style="left:1107px;top:111px;width:1px;height:18px;background:#b8c0c4;"></div>
<div class="b" style="left:1108px;top:111px;width:1px;height:18px;background:#fff;"></div>
<div class="t" style="left:1113.40px;top:113.34px;font-size:14.96px;color:#1a1a1a;transform-origin:0 12.66px;transform:scale(1,1.06);">Unit</div>
<div class="b" style="left:1146px;top:106px;width:53px;height:28px;background:#fff;"></div>
<div class="b" style="left:1183px;top:107px;width:15px;height:26px;background:#f7f7f7;"></div>
<svg class="b" style="left:1187px;top:119px;" width="8" height="5" viewBox="0 0 8 5"><path d="M0.5 0.5 H7.5 L4 4.5 Z" fill="#000"/></svg>
<div class="t" style="left:1150.50px;top:115.23px;font-size:13.90px;color:#1a1a1a;transform-origin:0 11.77px;transform:scale(1,1.06);">dB</div>
<svg class="b" style="left:1872px;top:112px;" width="14" height="14" viewBox="0 0 14 14"><path d="M1.2 3 V12.8 H11 V8" fill="none" stroke="#2f5580" stroke-width="1.8"/><path d="M7 0.8 H13.2 V7 Z" fill="#2f5580"/><path d="M5 9 L11 3" stroke="#2f5580" stroke-width="2"/></svg>
<svg class="b" style="left:0px;top:0px;left:0;top:0;" width="1901" height="1003" viewBox="0 0 1901 1003"><line x1="981.5" y1="171" x2="981.5" y2="792" stroke="#e6e6e6" stroke-width="1"/><line x1="1036.5" y1="171" x2="1036.5" y2="792" stroke="#cfcfcf" stroke-width="1"/><line x1="1090.5" y1="171" x2="1090.5" y2="792" stroke="#e6e6e6" stroke-width="1"/><line x1="1145.5" y1="171" x2="1145.5" y2="792" stroke="#cfcfcf" stroke-width="1"/><line x1="1199.5" y1="171" x2="1199.5" y2="792" stroke="#e6e6e6" stroke-width="1"/><line x1="1254.5" y1="171" x2="1254.5" y2="792" stroke="#cfcfcf" stroke-width="1"/><line x1="1308.5" y1="171" x2="1308.5" y2="792" stroke="#e6e6e6" stroke-width="1"/><line x1="1362.5" y1="171" x2="1362.5" y2="792" stroke="#cfcfcf" stroke-width="1"/><line x1="1417.5" y1="171" x2="1417.5" y2="792" stroke="#e6e6e6" stroke-width="1"/><line x1="1471.5" y1="171" x2="1471.5" y2="792" stroke="#cfcfcf" stroke-width="1"/><line x1="1526.5" y1="171" x2="1526.5" y2="792" stroke="#e6e6e6" stroke-width="1"/><line x1="1580.5" y1="171" x2="1580.5" y2="792" stroke="#cfcfcf" stroke-width="1"/><line x1="1635.5" y1="171" x2="1635.5" y2="792" stroke="#e6e6e6" stroke-width="1"/><line x1="927" y1="357.5" x2="1689" y2="357.5" stroke="#d6d6d6" stroke-width="1"/><line x1="927" y1="606.5" x2="1689" y2="606.5" stroke="#d6d6d6" stroke-width="1"/><rect x="927" y="280" width="527.3" height="156" fill="#40589a" fill-opacity="0.95"/><rect x="927" y="529" width="524.9" height="156" fill="#cc4a48" fill-opacity="0.92"/><rect x="927.5" y="171.5" width="762" height="621" fill="none" stroke="#6e6e6e" stroke-width="1"/></svg>
<div class="t" style="left:1251.40px;top:136.96px;font-size:12.21px;color:#111;">Signal to Noise Ratio</div>
<div class="t" style="left:1532.00px;top:153.83px;font-size:13.90px;color:#111;transform-origin:0 11.77px;transform:scale(1,1.06);">20.12.2019 16:48:26.923</div>
<svg class="b" style="left:1655px;top:179px;" width="26" height="19" viewBox="0 0 26 19"><g fill="none" stroke="#1a6cb0" stroke-width="1.6" stroke-linecap="round"><path d="M1.5 12.3 L8.6 3.3 H10.2 V11.6"/><path d="M5.6 10.2 H10"/><path d="M12.3 5 V13.6"/><ellipse cx="14.9" cy="8.4" rx="2.6" ry="2.9"/></g><path d="M11 1.4 C18.5 1.1 23.6 4.8 23.6 9.3 C23.6 13.8 18 17.3 8.5 17.1" fill="none" stroke="#1a6cb0" stroke-width="1.2"/></svg>
<div class="t" style="left:864.40px;top:345.08px;font-size:29.44px;color:#000;transform-origin:0 24.92px;transform:scale(1,1.1);">Ch1</div>
<div class="t" style="left:864.40px;top:594.08px;font-size:29.44px;color:#000;transform-origin:0 24.92px;transform:scale(1,1.1);">Ch2</div>
<div class="b" style="left:1692px;top:349px;width:16px;height:16px;background:#4a62a0;"></div>
<div class="b" style="left:1692px;top:598px;width:16px;height:16px;background:#cf5553;"></div>
<div class="t" style="left:1741.60px;top:345.09px;font-size:29.42px;color:#000;transform-origin:0 24.91px;transform:scale(1,1.12);">96,880</div>
<div class="t" style="left:1847.40px;top:346.26px;font-size:28.04px;color:#000;transform-origin:0 23.74px;transform:scale(1,1.12);">dB</div>
<div class="t" style="left:1741.60px;top:594.09px;font-size:29.42px;color:#000;transform-origin:0 24.91px;transform:scale(1,1.12);">96,430</div>
<div class="t" style="left:1847.40px;top:595.26px;font-size:28.04px;color:#000;transform-origin:0 23.74px;transform:scale(1,1.12);">dB</div>
<div class="t" style="left:918.99px;top:805.12px;font-size:28.80px;color:#000;transform-origin:0 24.38px;transform:scale(1,1.12);">0</div>
<div class="t" style="left:1019.84px;top:805.12px;font-size:28.80px;color:#000;transform-origin:0 24.38px;transform:scale(1,1.12);">20</div>
<div class="t" style="left:1128.70px;top:805.12px;font-size:28.80px;color:#000;transform-origin:0 24.38px;transform:scale(1,1.12);">40</div>
<div class="t" style="left:1237.55px;top:805.12px;font-size:28.80px;color:#000;transform-origin:0 24.38px;transform:scale(1,1.12);">60</div>
<div class="t" style="left:1346.41px;top:805.12px;font-size:28.80px;color:#000;transform-origin:0 24.38px;transform:scale(1,1.12);">80</div>
<div class="t" style="left:1447.26px;top:805.12px;font-size:28.80px;color:#000;transform-origin:0 24.38px;transform:scale(1,1.12);">100</div>
<div class="t" style="left:1556.12px;top:805.12px;font-size:28.80px;color:#000;transform-origin:0 24.38px;transform:scale(1,1.12);">120</div>
<div class="t" style="left:1664.97px;top:805.12px;font-size:28.80px;color:#000;transform-origin:0 24.38px;transform:scale(1,1.12);">140</div>
<div class="t" style="left:1221.40px;top:838.57px;font-size:14.91px;color:#111;transform-origin:0 12.63px;transform:scale(1,1.06);">Signal to Noise Ratio (dB)</div>
<svg class="b" style="left:850px;top:864px;" width="16" height="16" viewBox="0 0 16 16"><rect width="16" height="16" fill="#a9acae"/><path d="M4.2 3 V13" stroke="#dcdfe0" stroke-width="1.8"/><path d="M12.5 3 L5.8 8 L12.5 13 Z" fill="#dcdfe0"/></svg>
<svg class="b" style="left:873px;top:864px;" width="16" height="16" viewBox="0 0 16 16"><rect width="16" height="16" fill="#a9acae"/><path d="M11.8 3 V13" stroke="#dcdfe0" stroke-width="1.8"/><path d="M3.5 3 L10.2 8 L3.5 13 Z" fill="#dcdfe0"/></svg>
<div class="b" style="left:896px;top:863px;width:1px;height:18px;background:#b8c0c4;"></div>
<div class="b" style="left:897px;top:863px;width:1px;height:18px;background:#fff;"></div>
<svg class="b" style="left:901px;top:864px;" width="16" height="16" viewBox="0 0 16 16"><rect x="0" y="0" width="16" height="16" fill="#2f4a5c"/><path d="M8 2.5 V13.5 M2.5 8 H13.5" stroke="#fff" stroke-width="2"/></svg>
<div class="t" style="left:921.50px;top:865.20px;font-size:15.12px;color:#000;">Add</div>
<svg class="b" style="left:956px;top:871px;" width="7" height="4" viewBox="0 0 7 4"><path d="M0 0 H6 L3 3.5 Z" fill="#000"/></svg>
<svg class="b" style="left:968px;top:864px;" width="16" height="16" viewBox="0 0 16 16"><rect x="0" y="0" width="16" height="16" fill="#34506a"/><path d="M3.5 3.5 L12.5 12.5 M12.5 3.5 L3.5 12.5" stroke="#fff" stroke-width="2.2"/></svg>
<div class="t" style="left:988.60px;top:865.38px;font-size:14.91px;color:#000;">Delete</div>
<svg class="b" style="left:1040px;top:871px;" width="7" height="4" viewBox="0 0 7 4"><path d="M0 0 H6 L3 3.5 Z" fill="#000"/></svg>
<svg class="b" style="left:1051px;top:864px;" width="16" height="16" viewBox="0 0 16 16"><rect x="0" y="0" width="16" height="16" fill="#2f4a5c"/><polygon points="14.13,7.09 14.19,8.30 12.46,9.12 12.16,9.97 12.98,11.69 12.16,12.59 10.36,11.95 9.55,12.33 8.91,14.13 7.70,14.19 6.88,12.46 6.03,12.16 4.31,12.98 3.41,12.16 4.05,10.36 3.67,9.55 1.87,8.91 1.81,7.70 3.54,6.88 3.84,6.03 3.02,4.31 3.84,3.41 5.64,4.05 6.45,3.67 7.09,1.87 8.30,1.81 9.12,3.54 9.97,3.84 11.69,3.02 12.59,3.84 11.95,5.64 12.33,6.45" fill="#fff"/><circle cx="8" cy="8" r="2.2" fill="#2f4a5c"/></svg>
<div class="t" style="left:1071.40px;top:865.45px;font-size:14.82px;color:#000;">Details</div>
<svg class="b" style="left:1870px;top:866px;" width="16" height="13" viewBox="0 0 16 13"><path d="M8 1 V7" stroke="#2f5580" stroke-width="2"/><path d="M4 5 H12 L8 9 Z" fill="#2f5580"/><rect x="1" y="10.5" width="14" height="2" fill="#2f5580"/></svg>
<div class="b" style="left:897px;top:897px;width:87px;height:54px;box-sizing:border-box;border:2px solid #44657a;border-bottom:none;"></div>
<div class="b" style="left:906px;top:900px;width:70px;height:48px;background:#fff;box-sizing:border-box;border:1px solid #44657a;"></div>
<svg class="b" style="left:906px;top:900px;" width="70" height="48" viewBox="0 0 70 48"><rect x="5.5" y="2.5" width="50" height="40" fill="none" stroke="#e4e4e4" stroke-width="1"/><line x1="12.6" y1="3" x2="12.6" y2="42" stroke="#f0f0f0" stroke-width="0.6"/><line x1="19.8" y1="3" x2="19.8" y2="42" stroke="#f0f0f0" stroke-width="0.6"/><line x1="26.9" y1="3" x2="26.9" y2="42" stroke="#f0f0f0" stroke-width="0.6"/><line x1="34.1" y1="3" x2="34.1" y2="42" stroke="#f0f0f0" stroke-width="0.6"/><line x1="41.2" y1="3" x2="41.2" y2="42" stroke="#f0f0f0" stroke-width="0.6"/><line x1="48.4" y1="3" x2="48.4" y2="42" stroke="#f0f0f0" stroke-width="0.6"/><rect x="5.2" y="9.2" width="34.7" height="10.5" fill="#4a62a0"/><rect x="5.2" y="25.7" width="34.7" height="10.1" fill="#cf5553"/><rect x="56" y="14" width="1.6" height="1.6" fill="#1d2f80"/><rect x="56" y="30" width="1.6" height="1.6" fill="#d02020"/><rect x="59" y="14" width="10" height="1.6" fill="#c8c8c8"/><rect x="59" y="30" width="10" height="1.6" fill="#c8c8c8"/><rect x="5" y="44" width="50" height="1.2" fill="#d8d8d8"/><rect x="1.5" y="14" width="3" height="1.5" fill="#d8d8d8"/><rect x="1.5" y="30" width="3" height="1.5" fill="#d8d8d8"/></svg>
<div class="b" style="left:851px;top:950px;width:179px;height:22px;background:#4a6a80;"></div>
<div class="t" style="left:870.20px;top:953.26px;font-size:15.05px;color:#fff;">Signal to Noise Ratio</div>
<div class="t" style="left:1099.20px;top:980.27px;font-size:15.03px;color:#111;">Output:</div>
<div class="b" style="left:1156px;top:977px;width:230px;height:20px;background:#000;"></div>
<div class="t" style="left:1160.00px;top:980.48px;font-size:14.79px;color:#00ee00;">Analog Unbalanced 2 Ch, 20 ohm</div>
<div class="t" style="left:1392.40px;top:980.11px;font-size:15.23px;color:#111;">Input:</div>
<div class="b" style="left:1438px;top:977px;width:227px;height:20px;background:#000;"></div>
<div class="t" style="left:1442.00px;top:980.55px;font-size:14.70px;color:#00ee00;">Analog Balanced 2 Ch, 200 kohm</div>
<div class="b" style="left:1668px;top:977px;width:94px;height:20px;background:#000;"></div>
<div class="t" style="left:1672.00px;top:980.68px;font-size:14.55px;color:#00ee00;">320,0 mVrms</div>
<div class="b" style="left:1765px;top:977px;width:106px;height:20px;background:#000;"></div>
<div class="t" style="left:1769.00px;top:980.45px;font-size:14.82px;color:#00ee00;">20 Hz - 20 kHz</div>
<div class="b" style="left:1887px;top:986px;width:2px;height:2px;background:#8a8a8a;"></div>
<div class="b" style="left:1883px;top:990px;width:2px;height:2px;background:#8a8a8a;"></div>
<div class="b" style="left:1887px;top:990px;width:2px;height:2px;background:#8a8a8a;"></div>
<div class="b" style="left:1879px;top:994px;width:2px;height:2px;background:#8a8a8a;"></div>
<div class="b" style="left:1883px;top:994px;width:2px;height:2px;background:#8a8a8a;"></div>
<div class="b" style="left:1887px;top:994px;width:2px;height:2px;background:#8a8a8a;"></div>
</body></html>
